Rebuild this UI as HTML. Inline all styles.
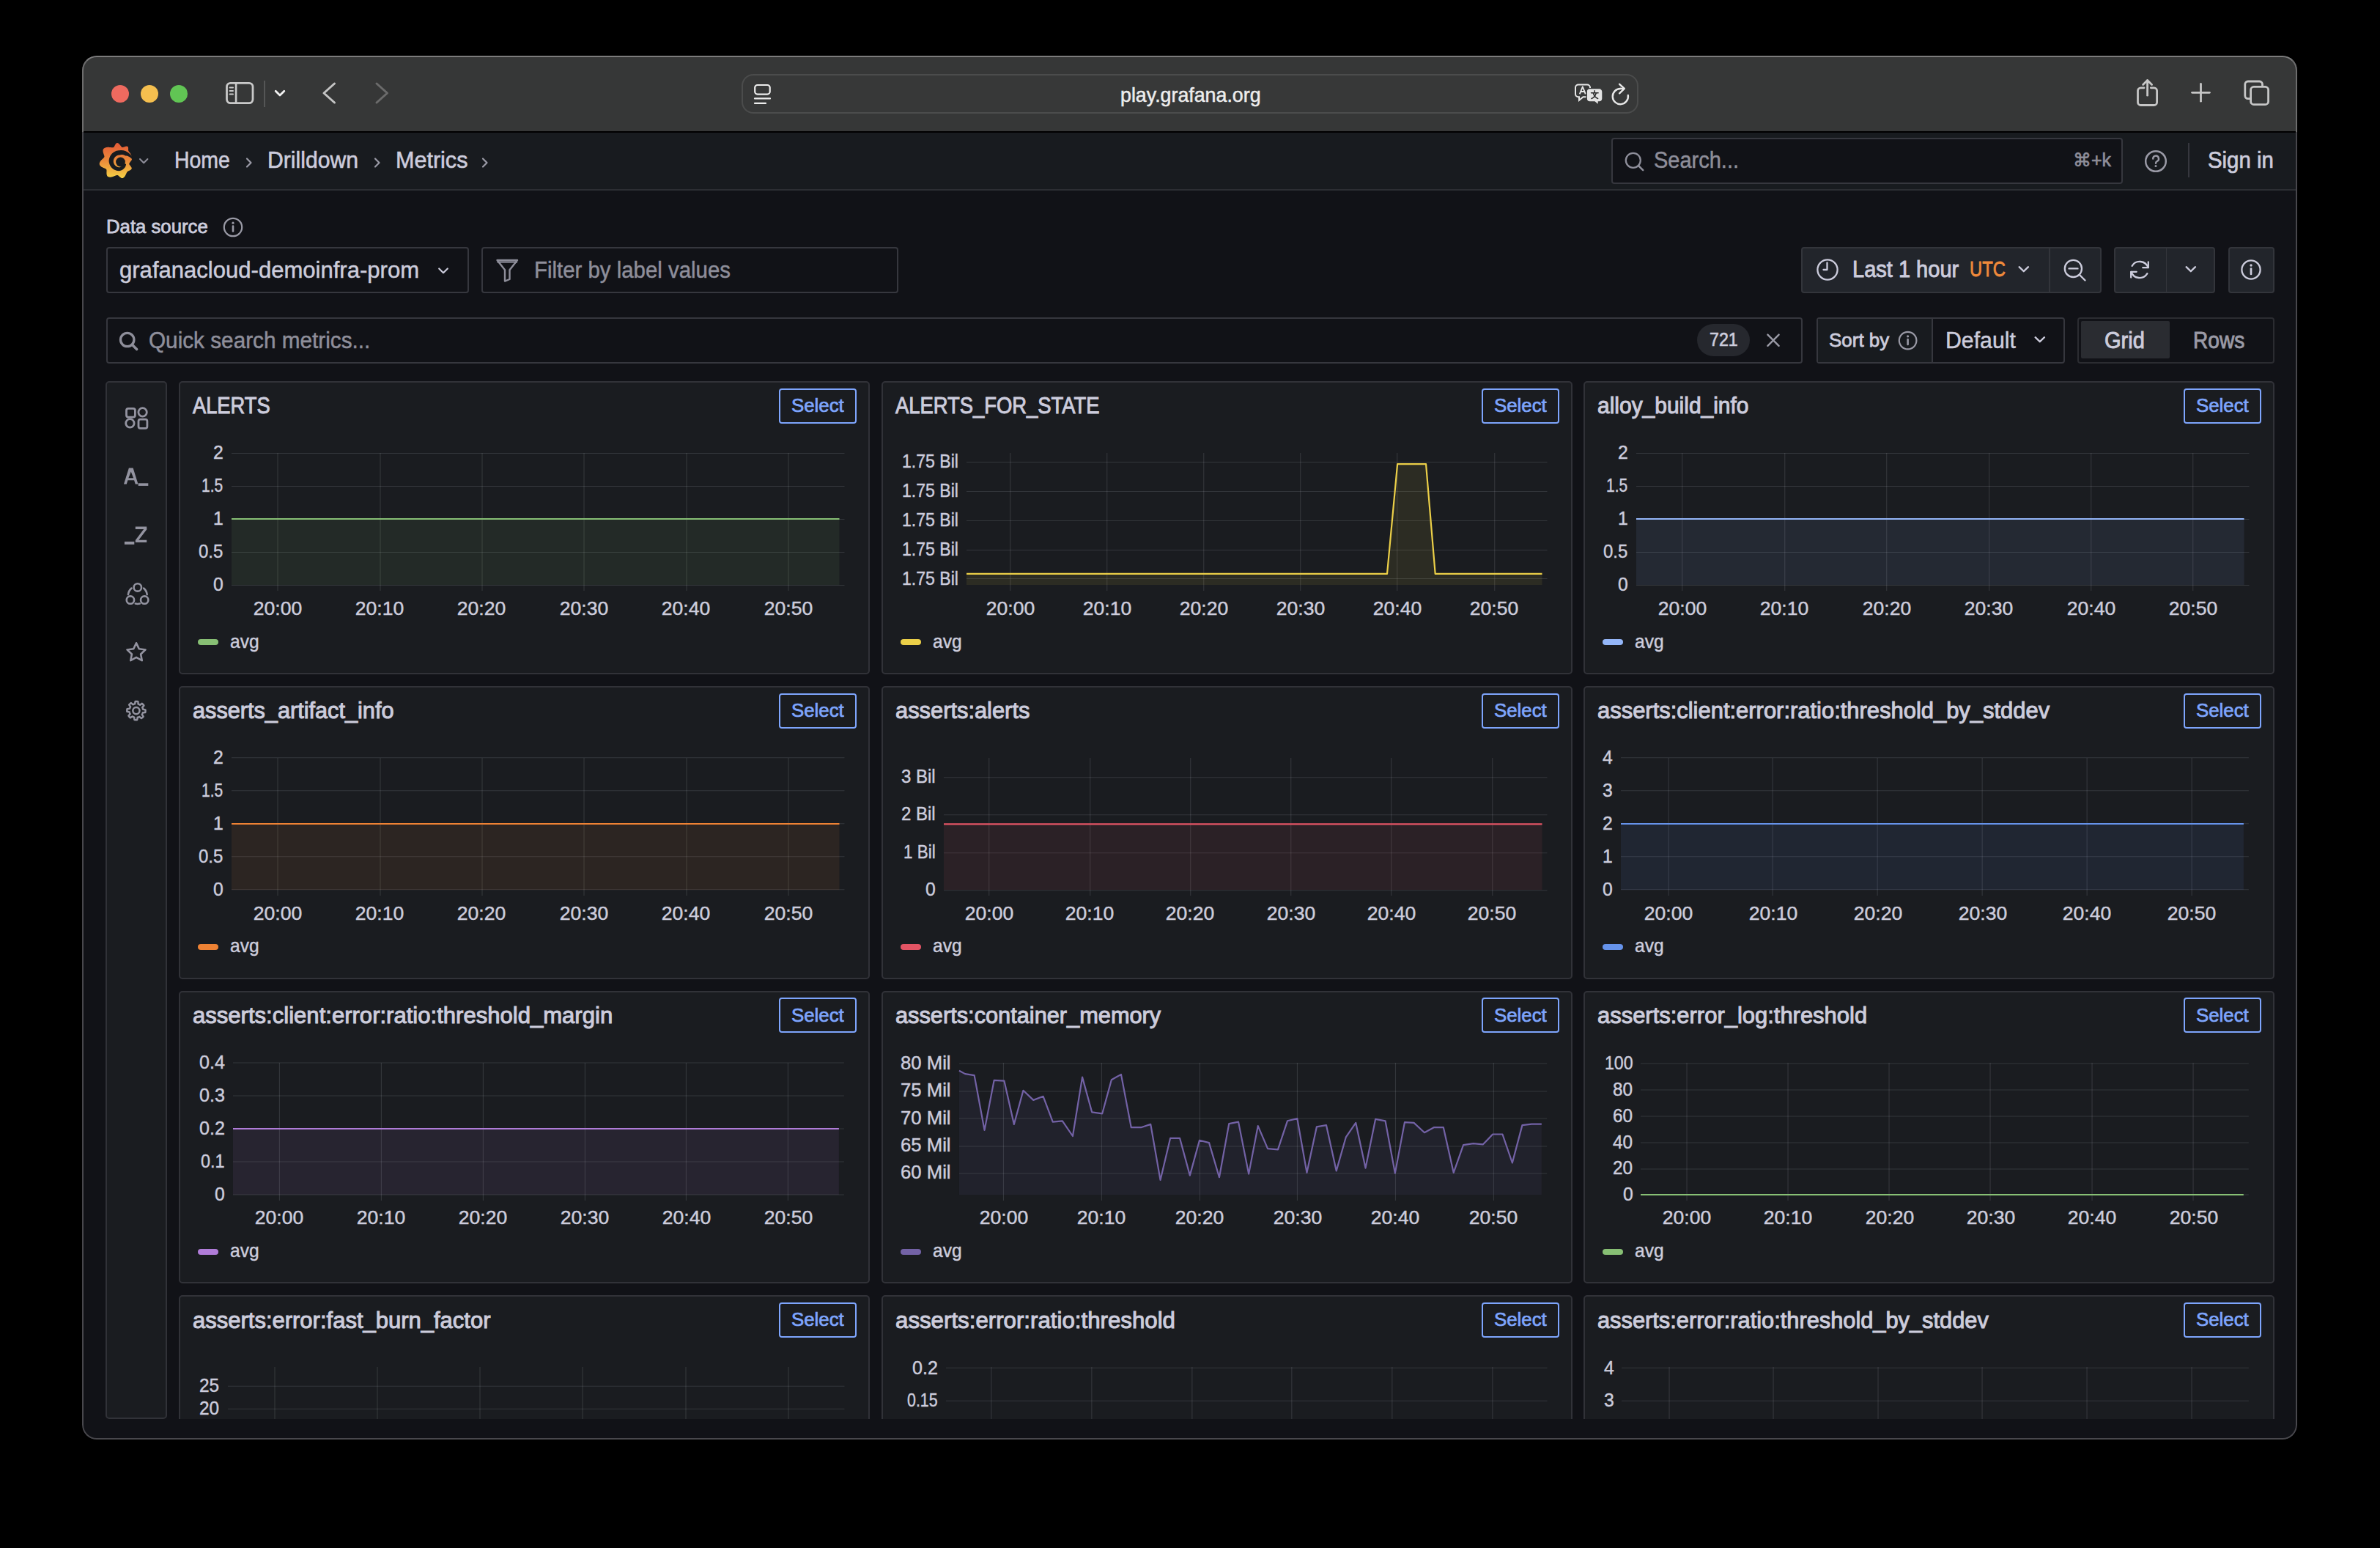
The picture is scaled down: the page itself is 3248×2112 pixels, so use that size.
<!DOCTYPE html>
<html><head><meta charset="utf-8"><title>Grafana Metrics Drilldown</title>
<style>
html,body{margin:0;padding:0;background:#000;width:3248px;height:2112px;overflow:hidden;}
body{position:relative;font-family:"Liberation Sans",sans-serif;}
.t{position:absolute;white-space:nowrap;line-height:1;}
#w{position:absolute;left:0;top:0;width:3248px;height:2112px;clip-path:inset(76px 113px 148px 112px round 20px);background:#111217;}
svg{overflow:visible;}
</style></head><body>
<div id="w">

<div style="position:absolute;left:0.00px;top:0.00px;width:3248.00px;height:180.00px;box-sizing:border-box;background:#363737;"></div>
<div style="position:absolute;left:0.00px;top:179.20px;width:3248.00px;height:1.60px;box-sizing:border-box;background:#000;"></div>
<div style="position:absolute;left:151.80px;top:115.80px;width:24.40px;height:24.40px;box-sizing:border-box;border-radius:50%;background:#ee6a5f;"></div>
<div style="position:absolute;left:191.80px;top:115.80px;width:24.40px;height:24.40px;box-sizing:border-box;border-radius:50%;background:#f5bf4f;"></div>
<div style="position:absolute;left:231.80px;top:115.80px;width:24.40px;height:24.40px;box-sizing:border-box;border-radius:50%;background:#61c554;"></div>
<svg style="position:absolute;left:300.00px;top:100.00px;" width="60" height="50" viewBox="0 0 60 50">
<rect x="9.5" y="13.3" width="35.5" height="27.3" rx="5" fill="none" stroke="#c9c9c9" stroke-width="2.8"/>
<line x1="22.1" y1="13" x2="22.1" y2="41" stroke="#c9c9c9" stroke-width="2.6"/>
<line x1="13.6" y1="19.6" x2="18" y2="19.6" stroke="#c9c9c9" stroke-width="2" stroke-linecap="round"/>
<line x1="13.6" y1="24" x2="18" y2="24" stroke="#c9c9c9" stroke-width="2" stroke-linecap="round"/>
<line x1="13.6" y1="28.4" x2="18" y2="28.4" stroke="#c9c9c9" stroke-width="2" stroke-linecap="round"/>
</svg>
<div style="position:absolute;left:360.30px;top:110.00px;width:1.60px;height:36.00px;box-sizing:border-box;background:#555656;"></div>
<svg style="position:absolute;left:370.00px;top:115.00px;" width="24" height="24" viewBox="0 0 24 24"><polyline points="6.2,9.3 12,15 17.8,9.3" fill="none" stroke="#f2f2f2" stroke-width="2.8" stroke-linecap="round" stroke-linejoin="round"/></svg>
<svg style="position:absolute;left:430.00px;top:105.00px;" width="40" height="45" viewBox="0 0 40 45"><polyline points="26.5,9 12,22 26.5,35" fill="none" stroke="#c4c4c4" stroke-width="3" stroke-linecap="round" stroke-linejoin="round"/></svg>
<svg style="position:absolute;left:500.00px;top:105.00px;" width="40" height="45" viewBox="0 0 40 45"><polyline points="14,9 28.5,22 14,35" fill="none" stroke="#6b6b6b" stroke-width="3" stroke-linecap="round" stroke-linejoin="round"/></svg>
<div style="position:absolute;left:1012.00px;top:101.00px;width:1223.50px;height:53.50px;box-sizing:border-box;border-radius:16px;border:2px solid #4b4c4c;background:#373838;"></div>
<svg style="position:absolute;left:1020.00px;top:108.00px;" width="40" height="40" viewBox="0 0 40 40">
<rect x="10.2" y="8" width="20.5" height="12.6" rx="3.6" fill="none" stroke="#ededed" stroke-width="2.2"/>
<line x1="10" y1="26.4" x2="31" y2="26.4" stroke="#ededed" stroke-width="2.2" stroke-linecap="round"/>
<line x1="10" y1="32.9" x2="25" y2="32.9" stroke="#ededed" stroke-width="2.2" stroke-linecap="round"/>
</svg>
<div class="t" style="left:1529.24px;top:115.72px;font-size:27.5px;color:#ededed;-webkit-text-stroke:0.5px #ededed;transform:scaleX(0.9737);transform-origin:left center;">play.grafana.org</div>
<svg style="position:absolute;left:2140.00px;top:105.00px;" width="60" height="45" viewBox="0 0 60 45">
<path d="M14,10.6 h12 a4,4 0 0 1 4,4 v8.6 a4,4 0 0 1 -4,4 h-5.5 l-5.5,4.6 v-4.6 h-1 a4,4 0 0 1 -4,-4 v-8.6 a4,4 0 0 1 4,-4 z" fill="none" stroke="#e6e6e6" stroke-width="2"/>
<path d="M15.8,23.4 L19.8,13.3 L23.8,23.4 M17.3,20 h5" fill="none" stroke="#e6e6e6" stroke-width="1.9" stroke-linejoin="round"/>
<path d="M29.6,15.6 h13 a4.4,4.4 0 0 1 4.4,4.4 v9.6 a4.4,4.4 0 0 1 -4.4,4.4 h-1.2 v4.4 l-5.2,-4.4 h-6.6 a4.4,4.4 0 0 1 -4.4,-4.4 v-9.6 a4.4,4.4 0 0 1 4.4,-4.4 z" fill="#e3e3e3" stroke="#373838" stroke-width="1.4"/>
<path d="M31.5,21.8 h9.6 M36.2,18.8 v3 M32,29.5 q4.5,-1.5 6.2,-7.2 M40.6,29.5 q-4.5,-1.5 -6.2,-7.2" fill="none" stroke="#2a2a2a" stroke-width="1.5" stroke-linecap="round"/>
</svg>
<svg style="position:absolute;left:2195.00px;top:108.00px;" width="40" height="40" viewBox="0 0 40 40">
<path d="M16.3,13 A10.6,10.6 0 1 0 26.8,22" fill="none" stroke="#e8e8e8" stroke-width="2.4" stroke-linecap="round"/>
<polyline points="15.1,6.8 21.8,12.8 15.1,19.3" fill="none" stroke="#e8e8e8" stroke-width="2.4" stroke-linecap="round" stroke-linejoin="round"/>
<line x1="16" y1="12.9" x2="21" y2="12.9" stroke="#e8e8e8" stroke-width="2.4"/>
</svg>
<svg style="position:absolute;left:2905.00px;top:100.00px;" width="50" height="50" viewBox="0 0 50 50">
<path d="M21,19.8 h-4.5 a4,4 0 0 0 -4,4 v15.7 a4,4 0 0 0 4,4 h18.1 a4,4 0 0 0 4,-4 v-15.7 a4,4 0 0 0 -4,-4 h-4.3" fill="none" stroke="#c6c6c6" stroke-width="2.8" stroke-linecap="round"/>
<line x1="25.6" y1="9.8" x2="25.6" y2="30.2" stroke="#c6c6c6" stroke-width="2.8" stroke-linecap="round"/>
<polyline points="19.6,15.6 25.6,9.6 31.6,15.6" fill="none" stroke="#c6c6c6" stroke-width="2.8" stroke-linecap="round" stroke-linejoin="round"/>
</svg>
<svg style="position:absolute;left:2980.00px;top:100.00px;" width="50" height="50" viewBox="0 0 50 50">
<line x1="23.5" y1="14.4" x2="23.5" y2="38.2" stroke="#c6c6c6" stroke-width="2.8" stroke-linecap="round"/>
<line x1="11.6" y1="26.3" x2="35.4" y2="26.3" stroke="#c6c6c6" stroke-width="2.8" stroke-linecap="round"/>
</svg>
<svg style="position:absolute;left:3055.00px;top:100.00px;" width="50" height="50" viewBox="0 0 50 50">
<path d="M16.4,34.6 h-3.6 a4,4 0 0 1 -4,-4 v-15.6 a4,4 0 0 1 4,-4 h15.7 a4,4 0 0 1 4,4 v3.4" fill="none" stroke="#c6c6c6" stroke-width="2.8"/>
<rect x="16.6" y="18.4" width="24" height="24.2" rx="4.2" fill="none" stroke="#c6c6c6" stroke-width="2.8"/>
</svg>
<div style="position:absolute;left:0.00px;top:181.00px;width:3248.00px;height:77.00px;box-sizing:border-box;background:#181b1f;"></div>
<div style="position:absolute;left:0.00px;top:258.00px;width:3248.00px;height:2.00px;box-sizing:border-box;background:#2c2e33;"></div>
<svg style="position:absolute;left:130.00px;top:190.00px;" width="56" height="58" viewBox="0 0 56 58">
<defs><linearGradient id="lg" x1="0" y1="5" x2="0" y2="53" gradientUnits="userSpaceOnUse">
<stop offset="0" stop-color="#e35a37"/><stop offset="0.5" stop-color="#ea8a3a"/><stop offset="1" stop-color="#f6d044"/></linearGradient></defs>
<path d="M6.98,30.00 L7.12,29.81 L7.26,29.62 L7.40,29.43 L7.55,29.25 L7.70,29.07 L7.86,28.89 L8.02,28.72 L8.18,28.54 L8.34,28.37 L8.51,28.21 L8.67,28.04 L8.84,27.88 L9.00,27.72 L9.17,27.57 L9.34,27.41 L9.50,27.26 L9.67,27.11 L9.83,26.96 L9.99,26.82 L10.15,26.68 L10.31,26.54 L10.46,26.40 L10.61,26.26 L10.76,26.12 L10.90,25.99 L11.04,25.85 L11.17,25.72 L11.30,25.59 L11.43,25.46 L11.54,25.32 L11.66,25.19 L11.76,25.06 L11.87,24.92 L11.96,24.79 L12.05,24.65 L12.13,24.52 L12.20,24.38 L12.26,24.24 L12.32,24.09 L12.37,23.95 L12.40,23.79 L12.42,23.63 L12.43,23.47 L12.42,23.30 L12.40,23.13 L12.38,22.94 L12.34,22.76 L12.30,22.56 L12.24,22.36 L12.18,22.16 L12.12,21.95 L12.04,21.73 L11.97,21.51 L11.88,21.28 L11.80,21.05 L11.71,20.81 L11.62,20.56 L11.53,20.32 L11.44,20.07 L11.35,19.81 L11.26,19.55 L11.17,19.29 L11.09,19.02 L11.01,18.76 L10.93,18.49 L10.85,18.21 L10.78,17.94 L10.72,17.67 L10.66,17.40 L10.61,17.12 L10.56,16.85 L10.53,16.58 L10.50,16.31 L10.48,16.04 L10.47,15.78 L10.47,15.52 L10.48,15.27 L10.50,15.02 L10.53,14.78 L10.58,14.54 L10.63,14.31 L10.70,14.09 L10.78,13.88 L10.87,13.67 L10.97,13.48 L11.09,13.30 L11.23,13.13 L11.37,12.97 L11.52,12.82 L11.68,12.68 L11.84,12.53 L12.00,12.40 L12.18,12.27 L12.36,12.15 L12.54,12.04 L12.73,11.93 L12.92,11.82 L13.11,11.72 L13.31,11.63 L13.51,11.54 L13.72,11.46 L13.93,11.39 L14.14,11.32 L14.35,11.25 L14.57,11.19 L14.79,11.14 L15.01,11.09 L15.23,11.05 L15.45,11.01 L15.68,10.97 L15.90,10.94 L16.13,10.91 L16.35,10.89 L16.58,10.87 L16.80,10.86 L17.03,10.85 L17.26,10.84 L17.48,10.83 L17.71,10.83 L17.94,10.84 L18.16,10.84 L18.38,10.85 L18.61,10.86 L18.83,10.87 L19.05,10.88 L19.27,10.90 L19.48,10.91 L19.70,10.93 L19.91,10.95 L20.13,10.97 L20.34,10.99 L20.55,11.01 L20.75,11.04 L20.96,11.06 L21.16,11.08 L21.36,11.10 L21.56,11.12 L21.76,11.14 L21.95,11.15 L22.15,11.17 L22.34,11.18 L22.53,11.20 L22.71,11.21 L22.90,11.21 L23.08,11.22 L23.26,11.22 L23.44,11.22 L23.61,11.21 L23.79,11.20 L23.96,11.19 L24.13,11.17 L24.30,11.15 L24.47,11.13 L24.64,11.10 L24.80,11.06 L24.96,11.01 L25.12,10.91 L25.27,10.79 L25.41,10.64 L25.55,10.46 L25.70,10.26 L25.84,10.03 L25.98,9.79 L26.12,9.52 L26.27,9.25 L26.42,8.96 L26.57,8.67 L26.73,8.36 L26.89,8.06 L27.05,7.76 L27.23,7.45 L27.40,7.16 L27.59,6.87 L27.77,6.59 L27.97,6.32 L28.16,6.08 L28.37,5.85 L28.57,5.64 L28.79,5.46 L29.00,5.30 L29.22,5.18 L29.43,5.08 L29.65,5.03 L29.87,5.01 L30.09,5.02 L30.31,5.05 L30.52,5.09 L30.74,5.16 L30.95,5.23 L31.16,5.33 L31.37,5.43 L31.57,5.55 L31.77,5.68 L31.97,5.83 L32.16,5.98 L32.35,6.14 L32.54,6.31 L32.72,6.49 L32.90,6.68 L33.08,6.87 L33.25,7.06 L33.42,7.26 L33.58,7.47 L33.75,7.67 L33.90,7.88 L34.06,8.08 L34.21,8.29 L34.36,8.49 L34.51,8.69 L34.66,8.89 L34.80,9.09 L34.94,9.28 L35.08,9.46 L35.22,9.64 L35.37,9.81 L35.51,9.98 L35.65,10.13 L35.79,10.27 L35.94,10.41 L36.09,10.53 L36.24,10.64 L36.39,10.74 L36.55,10.83 L36.72,10.90 L36.89,10.95 L37.07,10.98 L37.27,10.99 L37.47,10.98 L37.68,10.95 L37.90,10.91 L38.13,10.85 L38.37,10.78 L38.62,10.70 L38.88,10.62 L39.14,10.53 L39.41,10.43 L39.68,10.33 L39.96,10.23 L40.24,10.14 L40.52,10.04 L40.81,9.95 L41.10,9.87 L41.38,9.79 L41.67,9.73 L41.95,9.67 L42.23,9.63 L42.51,9.60 L42.77,9.58 L43.03,9.58 L43.28,9.60 L43.52,9.64 L43.75,9.70 L43.97,9.78 L44.16,9.88 L44.35,10.00 L44.50,10.16 L44.64,10.34 L44.75,10.54 L44.85,10.77 L44.92,11.02 L44.98,11.29 L45.03,11.56 L45.06,11.85 L45.07,12.15 L45.08,12.45 L45.08,12.75 L45.08,13.06 L45.07,13.36 L45.06,13.66 L45.05,13.95 L45.04,14.24 L45.04,14.51 L45.05,14.77 L45.07,15.02 L45.10,15.25 L45.15,15.46 L45.23,15.64 L45.31,15.82 L45.41,15.99 L45.50,16.15 L45.60,16.32 L45.70,16.47 L45.81,16.63 L45.92,16.78 L46.03,16.93 L46.14,17.08 L46.26,17.23 L46.38,17.38 L46.49,17.52 L46.61,17.67 L46.73,17.81 L46.85,17.96 L46.97,18.10 L47.09,18.25 L47.21,18.40 L47.33,18.55 L47.45,18.70 L47.56,18.85 L47.67,19.00 L47.78,19.16 L47.88,19.32 L47.98,19.48 L48.08,19.64 L48.17,19.81 L48.26,19.97 L48.34,20.15 L48.42,20.32 L48.49,20.49 L48.57,20.67 L48.64,20.84 L48.71,21.02 L48.78,21.19 L48.85,21.37 L48.92,21.55 L48.98,21.72 L49.05,21.90 L49.11,22.08 L49.17,22.26 L49.23,22.44 L49.28,22.62 L49.34,22.80 L49.39,22.98 L49.44,23.16 L49.49,23.34 L49.54,23.53 L49.58,23.71 L49.62,23.89 L49.66,24.08 L49.70,24.26 L49.73,24.44 L49.76,24.63 L49.79,24.82 L49.82,25.00 L49.85,25.19 L49.87,25.37 L49.89,25.56 L49.91,25.75 L49.92,25.93 L49.93,26.12 L49.94,26.31 L49.95,26.49 L49.95,26.68 L49.95,26.87 L49.95,27.06 L49.94,27.24 L49.93,27.43 L49.92,27.62 L49.91,27.80 L49.87,27.99 L49.79,28.18 L49.69,28.37 L49.59,28.56 L49.47,28.75 L49.34,28.93 L49.20,29.12 L49.06,29.30 L48.92,29.48 L48.77,29.65 L48.62,29.83 L48.47,30.00 L48.32,30.17 L48.17,30.33 L48.03,30.50 L47.90,30.66 L47.78,30.82 L47.67,30.98 L47.57,31.14 L47.47,31.29 L47.38,31.45 L47.28,31.60 L47.17,31.75 L47.07,31.90 L46.97,32.05 L46.86,32.19 L46.77,32.34 L46.67,32.48 L46.59,32.63 L46.51,32.77 L46.44,32.92 L46.38,33.06 L46.33,33.21 L46.30,33.36 L46.29,33.52 L46.29,33.67 L46.31,33.84 L46.35,34.00 L46.41,34.18 L46.47,34.36 L46.57,34.54 L46.69,34.74 L46.83,34.94 L46.99,35.16 L47.16,35.38 L47.35,35.61 L47.55,35.85 L47.75,36.09 L47.96,36.34 L48.17,36.60 L48.38,36.86 L48.58,37.13 L48.78,37.39 L48.96,37.66 L49.13,37.93 L49.29,38.20 L49.43,38.46 L49.55,38.72 L49.65,38.98 L49.72,39.23 L49.76,39.46 L49.78,39.69 L49.76,39.90 L49.70,40.09 L49.62,40.28 L49.53,40.46 L49.43,40.64 L49.32,40.80 L49.19,40.96 L49.06,41.12 L48.91,41.27 L48.76,41.41 L48.60,41.55 L48.43,41.68 L48.26,41.80 L48.08,41.92 L47.90,42.04 L47.71,42.15 L47.52,42.26 L47.32,42.36 L47.13,42.46 L46.93,42.55 L46.73,42.65 L46.53,42.74 L46.33,42.83 L46.14,42.91 L45.94,43.00 L45.75,43.09 L45.56,43.17 L45.37,43.26 L45.19,43.35 L45.01,43.44 L44.84,43.53 L44.67,43.63 L44.51,43.73 L44.36,43.83 L44.21,43.94 L44.07,44.05 L43.93,44.17 L43.81,44.30 L43.69,44.44 L43.58,44.58 L43.47,44.72 L43.36,44.87 L43.26,45.02 L43.16,45.18 L43.06,45.34 L42.96,45.51 L42.87,45.68 L42.78,45.85 L42.69,46.03 L42.60,46.21 L42.52,46.40 L42.43,46.58 L42.34,46.77 L42.25,46.97 L42.17,47.16 L42.08,47.36 L41.99,47.55 L41.90,47.75 L41.81,47.96 L41.71,48.16 L41.62,48.36 L41.52,48.56 L41.42,48.77 L41.32,48.97 L41.21,49.17 L41.11,49.37 L41.00,49.57 L40.88,49.77 L40.76,49.97 L40.64,50.17 L40.52,50.36 L40.39,50.55 L40.26,50.73 L40.12,50.92 L39.98,51.09 L39.84,51.27 L39.69,51.44 L39.54,51.60 L39.38,51.76 L39.22,51.91 L39.05,52.06 L38.88,52.20 L38.71,52.33 L38.53,52.46 L38.35,52.58 L38.17,52.69 L37.98,52.79 L37.78,52.88 L37.58,52.96 L37.38,53.03 L37.18,53.09 L36.96,53.13 L36.74,53.13 L36.51,53.11 L36.27,53.07 L36.03,53.00 L35.79,52.91 L35.54,52.80 L35.29,52.67 L35.04,52.53 L34.79,52.37 L34.54,52.20 L34.29,52.02 L34.04,51.83 L33.80,51.63 L33.55,51.43 L33.32,51.22 L33.08,51.01 L32.86,50.80 L32.63,50.60 L32.41,50.39 L32.20,50.20 L31.99,50.01 L31.79,49.83 L31.59,49.66 L31.39,49.50 L31.21,49.37 L31.02,49.24 L30.84,49.14 L30.67,49.06 L30.50,49.00 L30.33,48.97 L30.16,48.96 L29.99,48.97 L29.83,48.99 L29.66,49.01 L29.50,49.04 L29.33,49.07 L29.17,49.11 L29.00,49.15 L28.83,49.19 L28.66,49.24 L28.49,49.29 L28.32,49.35 L28.15,49.41 L27.98,49.47 L27.81,49.53 L27.63,49.60 L27.45,49.67 L27.27,49.74 L27.09,49.82 L26.91,49.89 L26.72,49.97 L26.54,50.04 L26.35,50.12 L26.16,50.20 L25.97,50.28 L25.78,50.36 L25.58,50.44 L25.38,50.52 L25.18,50.60 L24.98,50.67 L24.78,50.75 L24.57,50.82 L24.37,50.90 L24.16,50.97 L23.95,51.04 L23.74,51.11 L23.53,51.17 L23.31,51.23 L23.10,51.29 L22.88,51.34 L22.66,51.40 L22.44,51.44 L22.22,51.49 L22.00,51.53 L21.78,51.57 L21.56,51.60 L21.34,51.62 L21.12,51.64 L20.90,51.66 L20.68,51.67 L20.46,51.68 L20.24,51.68 L20.02,51.67 L19.81,51.66 L19.59,51.64 L19.37,51.62 L19.16,51.59 L18.95,51.55 L18.74,51.51 L18.54,51.46 L18.33,51.40 L18.13,51.33 L17.93,51.26 L17.74,51.18 L17.55,51.09 L17.36,51.00 L17.18,50.89 L17.00,50.78 L16.84,50.65 L16.68,50.50 L16.54,50.34 L16.40,50.16 L16.28,49.97 L16.16,49.77 L16.06,49.56 L15.96,49.33 L15.87,49.10 L15.80,48.86 L15.73,48.61 L15.67,48.35 L15.61,48.09 L15.57,47.82 L15.53,47.55 L15.50,47.28 L15.48,47.00 L15.46,46.72 L15.44,46.45 L15.44,46.17 L15.43,45.89 L15.43,45.61 L15.43,45.33 L15.44,45.06 L15.45,44.79 L15.46,44.52 L15.47,44.26 L15.48,44.00 L15.49,43.75 L15.49,43.51 L15.50,43.27 L15.50,43.04 L15.50,42.81 L15.49,42.60 L15.48,42.39 L15.46,42.19 L15.43,42.00 L15.40,41.82 L15.35,41.65 L15.30,41.50 L15.24,41.35 L15.16,41.21 L15.07,41.08 L14.97,40.96 L14.86,40.85 L14.75,40.74 L14.63,40.63 L14.50,40.53 L14.37,40.44 L14.23,40.34 L14.08,40.25 L13.93,40.17 L13.77,40.08 L13.61,40.00 L13.44,39.92 L13.26,39.83 L13.08,39.75 L12.90,39.67 L12.71,39.60 L12.52,39.52 L12.32,39.44 L12.12,39.35 L11.92,39.27 L11.72,39.19 L11.51,39.10 L11.30,39.02 L11.09,38.93 L10.88,38.84 L10.66,38.75 L10.45,38.65 L10.24,38.55 L10.02,38.45 L9.81,38.34 L9.60,38.24 L9.39,38.12 L9.18,38.01 L8.97,37.89 L8.76,37.77 L8.56,37.64 L8.36,37.51 L8.17,37.38 L7.98,37.24 L7.79,37.10 L7.61,36.95 L7.44,36.80 L7.27,36.64 L7.10,36.49 L6.95,36.32 L6.80,36.16 L6.66,35.99 L6.52,35.81 L6.40,35.64 L6.28,35.45 L6.18,35.27 L6.08,35.08 L5.99,34.89 L5.92,34.70 L5.85,34.50 L5.80,34.30 L5.76,34.10 L5.73,33.89 L5.71,33.69 L5.71,33.48 L5.71,33.27 L5.72,33.06 L5.75,32.85 L5.78,32.65 L5.83,32.44 L5.88,32.23 L5.94,32.02 L6.02,31.81 L6.09,31.60 L6.18,31.40 L6.28,31.19 L6.38,30.99 L6.49,30.79 L6.60,30.59 L6.72,30.39 L6.85,30.19Z" fill="url(#lg)"/>
<path d="M42.11,34.01 L42.03,34.54 L41.93,35.06 L41.79,35.59 L41.62,36.12 L41.41,36.64 L41.18,37.16 L40.91,37.67 L40.60,38.17 L40.27,38.66 L39.90,39.14 L39.50,39.61 L39.07,40.05 L38.61,40.48 L38.12,40.89 L37.60,41.27 L37.05,41.63 L36.48,41.96 L35.88,42.26 L35.26,42.53 L34.62,42.77 L33.95,42.98 L33.27,43.12 L32.58,43.15 L31.89,43.14 L31.19,43.10 L30.49,43.02 L29.80,42.90 L29.11,42.75 L28.43,42.55 L27.75,42.33 L27.09,42.06 L26.43,41.76 L25.79,41.42 L25.17,41.05 L24.57,40.65 L23.98,40.21 L23.41,39.74 L22.87,39.24 L22.36,38.71 L21.87,38.14 L21.41,37.56 L20.98,36.94 L20.58,36.30 L20.21,35.64 L19.87,34.96 L19.58,34.26 L19.31,33.54 L19.09,32.80 L18.90,32.05 L18.76,31.29 L18.65,30.52 L18.60,29.74 L18.64,28.96 L18.71,28.18 L18.83,27.41 L18.99,26.65 L19.19,25.90 L19.42,25.15 L19.70,24.42 L20.01,23.71 L20.36,23.01 L20.74,22.33 L21.16,21.68 L21.62,21.05 L22.10,20.44 L22.62,19.85 L23.17,19.30 L23.74,18.78 L24.34,18.28 L24.97,17.82 L25.62,17.39 L26.29,17.00 L26.98,16.64 L27.69,16.32 L28.42,16.04 L29.16,15.79 L29.91,15.58 L30.67,15.42 L31.43,15.29 L32.21,15.20 L32.98,15.16 L33.76,15.12 L34.55,15.05 L35.34,15.02 L36.14,15.04 L36.94,15.09 L37.75,15.20 L38.55,15.34 L39.35,15.53 L40.14,15.76 L40.92,16.04 L41.70,16.36 L42.46,16.72 L43.20,17.12 L43.93,17.57 L44.64,18.06 L45.34,18.57 L46.05,19.09 L46.73,19.66 L47.39,20.27 L48.02,20.93 L48.62,21.62 L49.19,22.35 L49.72,23.11 L50.22,23.91 L50.68,24.75 L51.09,25.61 L51.46,26.51 L49.87,26.82 L49.18,26.09 L48.46,25.43 L47.71,24.83 L46.94,24.29 L46.16,23.83 L45.36,23.42 L44.56,23.09 L43.76,22.81 L42.96,22.61 L42.17,22.46 L41.39,22.38 L40.80,22.17 L40.28,21.92 L39.76,21.69 L39.23,21.50 L38.70,21.34 L38.17,21.21 L37.64,21.12 L37.11,21.05 L36.59,21.02 L36.08,21.01 L35.57,21.04 L35.07,21.09 L34.58,21.17 L34.11,21.27 L33.65,21.40 L33.20,21.45 L32.75,21.47 L32.31,21.52 L31.87,21.59 L31.43,21.68 L30.99,21.80 L30.56,21.93 L30.14,22.09 L29.73,22.28 L29.33,22.48 L28.94,22.70 L28.56,22.95 L28.20,23.21 L27.85,23.50 L27.51,23.80 L27.19,24.12 L26.89,24.45 L26.60,24.80 L26.33,25.17 L26.09,25.55 L25.86,25.94 L25.65,26.34 L25.47,26.75 L25.30,27.18 L25.16,27.61 L25.04,28.05 L24.95,28.49 L24.88,28.94 L24.83,29.39 L24.80,29.85 L24.81,30.30 L24.86,30.76 L24.92,31.21 L25.01,31.65 L25.12,32.09 L25.25,32.52 L25.41,32.95 L25.59,33.36 L25.78,33.76 L26.00,34.16 L26.24,34.53 L26.50,34.90 L26.78,35.25 L27.07,35.59 L27.38,35.91 L27.71,36.21 L28.05,36.49 L28.41,36.76 L28.77,37.01 L29.15,37.23 L29.54,37.44 L29.95,37.62 L30.35,37.79 L30.77,37.93 L31.19,38.05 L31.62,38.14 L32.05,38.22 L32.48,38.27 L32.92,38.30 L33.36,38.30 L33.79,38.18 L34.20,37.98 L34.59,37.76 L34.96,37.52 L35.31,37.26 L35.64,36.99 L35.94,36.70 L36.22,36.40 L36.47,36.09 L36.70,35.78 L36.91,35.45 L37.09,35.12 L37.24,34.79 L37.37,34.46 L37.48,34.12 L37.56,33.79 L37.62,33.46 L37.65,33.13 L37.67,32.81 L37.66,32.50 L37.63,32.19 L37.58,31.90Z" fill="#181b1f"/>
<circle cx="34.5" cy="31" r="6.4" fill="#181b1f"/>
</svg>
<svg style="position:absolute;left:186.00px;top:210.00px;" width="20" height="20" viewBox="0 0 20 20"><polyline points="5,7 10.2,12.2 15.4,7" fill="none" stroke="#8e8e9a" stroke-width="2" stroke-linecap="round" stroke-linejoin="round"/></svg>
<div class="t" style="left:237.88px;top:202.76px;font-size:31px;color:#ccccdc;-webkit-text-stroke:0.6px #ccccdc;transform:scaleX(0.9172);transform-origin:left center;">Home</div>
<div class="t" style="left:364.79px;top:202.76px;font-size:31px;color:#ccccdc;-webkit-text-stroke:0.6px #ccccdc;transform:scaleX(0.9720);transform-origin:left center;">Drilldown</div>
<div class="t" style="left:540.30px;top:202.76px;font-size:31px;color:#ccccdc;-webkit-text-stroke:0.6px #ccccdc;transform:scaleX(0.9851);transform-origin:left center;">Metrics</div>
<svg style="position:absolute;left:329.50px;top:210.00px;" width="20" height="24" viewBox="0 0 20 24"><polyline points="7,6.5 12.5,12 7,17.5" fill="none" stroke="#9a9aa6" stroke-width="2.2" stroke-linecap="round" stroke-linejoin="round"/></svg>
<svg style="position:absolute;left:504.50px;top:210.00px;" width="20" height="24" viewBox="0 0 20 24"><polyline points="7,6.5 12.5,12 7,17.5" fill="none" stroke="#9a9aa6" stroke-width="2.2" stroke-linecap="round" stroke-linejoin="round"/></svg>
<svg style="position:absolute;left:652.00px;top:210.00px;" width="20" height="24" viewBox="0 0 20 24"><polyline points="7,6.5 12.5,12 7,17.5" fill="none" stroke="#9a9aa6" stroke-width="2.2" stroke-linecap="round" stroke-linejoin="round"/></svg>
<div style="position:absolute;left:2198.50px;top:187.50px;width:698.50px;height:63.00px;box-sizing:border-box;background:#111217;border:2px solid #36373e;border-radius:4px;"></div>
<svg style="position:absolute;left:2210.00px;top:200.00px;" width="40" height="40" viewBox="0 0 40 40"><circle cx="18.8" cy="18.8" r="10" fill="none" stroke="#8e8e9a" stroke-width="2.3"/><line x1="26" y1="26" x2="32.2" y2="32.2" stroke="#8e8e9a" stroke-width="2.5" stroke-linecap="round"/></svg>
<div class="t" style="left:2257.43px;top:202.96px;font-size:31px;color:#8e8e9a;-webkit-text-stroke:0.5px #8e8e9a;transform:scaleX(0.9352);transform-origin:left center;">Search...</div>
<div class="t" style="left:1881.00px;width:1000px;text-align:right;top:205.84px;font-size:25px;color:#8e8e9a;-webkit-text-stroke:0.6px #8e8e9a;">&#8984;+k</div>
<svg style="position:absolute;left:2922.00px;top:200.00px;" width="40" height="40" viewBox="0 0 40 40"><circle cx="20" cy="20" r="13.8" fill="none" stroke="#9a9aa6" stroke-width="2.5"/><path d="M16.2,16.6 a3.9,3.9 0 1 1 5.6,3.4 c-1.3,0.7 -1.8,1.4 -1.8,2.8" fill="none" stroke="#9a9aa6" stroke-width="2.4" stroke-linecap="round"/><circle cx="20" cy="26.6" r="1.5" fill="#9a9aa6"/></svg>
<div style="position:absolute;left:2985.80px;top:195.00px;width:1.80px;height:47.00px;box-sizing:border-box;background:#36373e;"></div>
<div class="t" style="left:3012.93px;top:203.26px;font-size:31px;color:#ccccdc;-webkit-text-stroke:0.7px #ccccdc;transform:scaleX(0.9468);transform-origin:left center;">Sign in</div>
<div class="t" style="left:144.90px;top:296.49px;font-size:26px;color:#ccccdc;-webkit-text-stroke:0.8px #ccccdc;transform:scaleX(0.9893);transform-origin:left center;">Data source</div>
<svg style="position:absolute;left:298.00px;top:290.00px;" width="40" height="40" viewBox="0 0 40 40"><circle cx="20" cy="20" r="12.2" fill="none" stroke="#9a9aa6" stroke-width="2.2"/><line x1="20" y1="18.5" x2="20" y2="25.5" stroke="#9a9aa6" stroke-width="2.6" stroke-linecap="round"/><circle cx="20" cy="14.2" r="1.6" fill="#9a9aa6"/></svg>
<div style="position:absolute;left:144.50px;top:336.50px;width:495.50px;height:63.00px;box-sizing:border-box;background:#111217;border:2px solid #36373e;border-radius:4px;"></div>
<div class="t" style="left:162.75px;top:352.76px;font-size:31px;color:#ccccdc;-webkit-text-stroke:0.5px #ccccdc;transform:scaleX(1.0016);transform-origin:left center;">grafanacloud-demoinfra-prom</div>
<svg style="position:absolute;left:595.00px;top:360.00px;" width="20" height="20" viewBox="0 0 20 20"><polyline points="4.2,6.5 10,12.2 15.8,6.5" fill="none" stroke="#ccccdc" stroke-width="2.2" stroke-linecap="round" stroke-linejoin="round"/></svg>
<div style="position:absolute;left:656.50px;top:336.50px;width:569.50px;height:63.00px;box-sizing:border-box;background:#111217;border:2px solid #36373e;border-radius:4px;"></div>
<svg style="position:absolute;left:672.00px;top:348.00px;" width="40" height="40" viewBox="0 0 40 40"><path d="M6.5,7 h27.5 l-10.5,13.2 v12.8 l-6.5,2.6 v-15.4 z" fill="none" stroke="#8e8e9a" stroke-width="2.4" stroke-linejoin="round"/><line x1="6.5" y1="9.5" x2="34" y2="9.5" stroke="#8e8e9a" stroke-width="2.2"/></svg>
<div class="t" style="left:728.74px;top:353.46px;font-size:31px;color:#8e8e9a;-webkit-text-stroke:0.5px #8e8e9a;transform:scaleX(0.9485);transform-origin:left center;">Filter by label values</div>
<div style="position:absolute;left:2457.50px;top:336.50px;width:410.00px;height:63.00px;box-sizing:border-box;background:#22252b;border:2px solid #33353b;border-radius:4px;"></div>
<div style="position:absolute;left:2795.80px;top:338.00px;width:1.80px;height:60.00px;box-sizing:border-box;background:#33353b;"></div>
<svg style="position:absolute;left:2474.00px;top:348.00px;" width="40" height="40" viewBox="0 0 40 40"><circle cx="20" cy="20" r="13.6" fill="none" stroke="#ccccdc" stroke-width="2.3"/><polyline points="19.5,10.5 19.5,20 14.5,20" fill="none" stroke="#ccccdc" stroke-width="2.3" stroke-linecap="round" stroke-linejoin="round"/></svg>
<div class="t" style="left:2528.42px;top:351.76px;font-size:31px;color:#ccccdc;-webkit-text-stroke:0.9px #ccccdc;transform:scaleX(0.9360);transform-origin:left center;">Last 1 hour</div>
<div class="t" style="left:2687.83px;top:353.45px;font-size:29px;color:#ef8a3b;-webkit-text-stroke:0.8px #ef8a3b;transform:scaleX(0.8196);transform-origin:left center;">UTC</div>
<svg style="position:absolute;left:2752.00px;top:358.00px;" width="20" height="20" viewBox="0 0 20 20"><polyline points="3.6,6.2 9.8,12.2 16,6.2" fill="none" stroke="#ccccdc" stroke-width="2.3" stroke-linecap="round" stroke-linejoin="round"/></svg>
<svg style="position:absolute;left:2810.00px;top:347.00px;" width="40" height="40" viewBox="0 0 40 40"><circle cx="19.4" cy="19.4" r="11.6" fill="none" stroke="#ccccdc" stroke-width="2.3"/><line x1="13.6" y1="19.4" x2="25.4" y2="19.4" stroke="#ccccdc" stroke-width="2.4" stroke-linecap="round"/><line x1="28" y1="28" x2="35.5" y2="35.5" stroke="#ccccdc" stroke-width="2.4" stroke-linecap="round"/></svg>
<div style="position:absolute;left:2885.00px;top:336.50px;width:138.00px;height:63.00px;box-sizing:border-box;background:#22252b;border:2px solid #33353b;border-radius:4px;"></div>
<div style="position:absolute;left:2955.50px;top:338.00px;width:1.80px;height:60.00px;box-sizing:border-box;background:#33353b;"></div>
<svg style="position:absolute;left:2900.00px;top:348.00px;" width="40" height="40" viewBox="0 0 40 40"><path d="M31.5,17 A12.2,12.2 0 0 0 9.6,14.8 M8.5,23 A12.2,12.2 0 0 0 30.4,25.2" fill="none" stroke="#ccccdc" stroke-width="2.3" stroke-linecap="round"/><polyline points="31.8,9.5 31.8,17.2 24.3,17.2" fill="none" stroke="#ccccdc" stroke-width="2.3" stroke-linecap="round" stroke-linejoin="round"/><polyline points="8.2,30.5 8.2,22.8 15.7,22.8" fill="none" stroke="#ccccdc" stroke-width="2.3" stroke-linecap="round" stroke-linejoin="round"/></svg>
<svg style="position:absolute;left:2980.00px;top:358.00px;" width="20" height="20" viewBox="0 0 20 20"><polyline points="3.6,6.2 9.8,12.2 16,6.2" fill="none" stroke="#ccccdc" stroke-width="2.3" stroke-linecap="round" stroke-linejoin="round"/></svg>
<div style="position:absolute;left:3040.50px;top:336.50px;width:63.00px;height:63.00px;box-sizing:border-box;background:#22252b;border:2px solid #33353b;border-radius:4px;"></div>
<svg style="position:absolute;left:3052.00px;top:348.00px;" width="40" height="40" viewBox="0 0 40 40"><circle cx="20" cy="20" r="12.6" fill="none" stroke="#ccccdc" stroke-width="2.3"/><line x1="20" y1="18.5" x2="20" y2="26" stroke="#ccccdc" stroke-width="2.7" stroke-linecap="round"/><circle cx="20" cy="14" r="1.7" fill="#ccccdc"/></svg>
<div style="position:absolute;left:144.50px;top:432.50px;width:2315.00px;height:63.00px;box-sizing:border-box;background:#111217;border:2px solid #36373e;border-radius:4px;"></div>
<svg style="position:absolute;left:155.00px;top:444.00px;" width="40" height="40" viewBox="0 0 40 40"><circle cx="18.7" cy="19.5" r="9.2" fill="none" stroke="#8e8e9a" stroke-width="3.3"/><line x1="25.6" y1="26.6" x2="31.6" y2="32.6" stroke="#8e8e9a" stroke-width="3.6" stroke-linecap="round"/></svg>
<div class="t" style="left:202.64px;top:449.26px;font-size:31px;color:#8e8e9a;-webkit-text-stroke:0.5px #8e8e9a;transform:scaleX(0.9589);transform-origin:left center;">Quick search metrics...</div>
<div style="position:absolute;left:2316.00px;top:442.00px;width:72.00px;height:43.50px;box-sizing:border-box;background:#26282e;border-radius:22px;"></div>
<div class="t" style="left:2332.81px;top:449.99px;font-size:26px;color:#ccccdc;-webkit-text-stroke:0.7px #ccccdc;transform:scaleX(0.8921);transform-origin:left center;">721</div>
<svg style="position:absolute;left:2405.00px;top:449.00px;" width="30" height="30" viewBox="0 0 30 30"><line x1="7.4" y1="7.6" x2="22.6" y2="22.8" stroke="#9a9aa6" stroke-width="2.4" stroke-linecap="round"/><line x1="22.6" y1="7.6" x2="7.4" y2="22.8" stroke="#9a9aa6" stroke-width="2.4" stroke-linecap="round"/></svg>
<div style="position:absolute;left:2479.00px;top:432.50px;width:338.50px;height:63.00px;box-sizing:border-box;background:#111217;border:2px solid #36373e;border-radius:4px;"></div>
<div style="position:absolute;left:2481.00px;top:434.50px;width:156.00px;height:59.00px;box-sizing:border-box;background:#181b1f;"></div>
<div style="position:absolute;left:2636.20px;top:434.00px;width:1.80px;height:60.00px;box-sizing:border-box;background:#36373e;"></div>
<div class="t" style="left:2496.40px;top:451.19px;font-size:26px;color:#ccccdc;-webkit-text-stroke:0.8px #ccccdc;transform:scaleX(0.9981);transform-origin:left center;">Sort by</div>
<svg style="position:absolute;left:2584.00px;top:445.00px;" width="40" height="40" viewBox="0 0 40 40"><circle cx="19.6" cy="19.6" r="11.8" fill="none" stroke="#9a9aa6" stroke-width="2.2"/><line x1="19.6" y1="18" x2="19.6" y2="25" stroke="#9a9aa6" stroke-width="2.6" stroke-linecap="round"/><circle cx="19.6" cy="13.8" r="1.6" fill="#9a9aa6"/></svg>
<div class="t" style="left:2654.94px;top:448.76px;font-size:31px;color:#ccccdc;-webkit-text-stroke:0.5px #ccccdc;transform:scaleX(0.9758);transform-origin:left center;">Default</div>
<svg style="position:absolute;left:2774.00px;top:454.00px;" width="20" height="20" viewBox="0 0 20 20"><polyline points="3.6,6.2 9.8,12.2 16,6.2" fill="none" stroke="#ccccdc" stroke-width="2.3" stroke-linecap="round" stroke-linejoin="round"/></svg>
<div style="position:absolute;left:2835.00px;top:432.50px;width:268.50px;height:63.00px;box-sizing:border-box;background:#111217;border:2px solid #2b2c31;border-radius:4px;"></div>
<div style="position:absolute;left:2840.00px;top:438.00px;width:121.00px;height:51.00px;box-sizing:border-box;background:#2a2c31;border-radius:2px;"></div>
<div class="t" style="left:2872.42px;top:448.76px;font-size:31px;color:#ccccdc;-webkit-text-stroke:0.9px #ccccdc;transform:scaleX(0.9363);transform-origin:left center;">Grid</div>
<div class="t" style="left:2993.41px;top:448.76px;font-size:31px;color:#9a9aa6;-webkit-text-stroke:0.9px #9a9aa6;transform:scaleX(0.9056);transform-origin:left center;">Rows</div>
<div style="position:absolute;left:144.00px;top:520.00px;width:84.00px;height:1416.00px;box-sizing:border-box;background:#1a1c20;border:2px solid #313238;border-radius:5px;"></div>
<svg style="position:absolute;left:160.00px;top:545.00px;" width="50" height="50" viewBox="0 0 50 50"><rect x="12.5" y="12.3" width="11.9" height="11.8" rx="2.6" fill="none" stroke="#9393a0" stroke-width="2.8"/><circle cx="34.6" cy="17.4" r="5.7" fill="none" stroke="#9393a0" stroke-width="2.8"/><circle cx="17.4" cy="32.4" r="5.7" fill="none" stroke="#9393a0" stroke-width="2.8"/><rect x="29" y="27.2" width="11.9" height="12.1" rx="2.6" fill="none" stroke="#9393a0" stroke-width="2.8"/></svg>
<svg style="position:absolute;left:160.00px;top:630.00px;" width="50" height="40" viewBox="0 0 50 40"><path fill-rule="evenodd" d="M15.9,8.6 L21.6,8.6 L28.5,30.4 L24.7,30.4 L23.1,25.3 L14.4,25.3 L12.8,30.4 L9,30.4 Z M18.75,13.4 L22.1,22.2 L15.4,22.2 Z" fill="#9393a0"/><rect x="28.7" y="29.3" width="13.6" height="3.6" fill="#9393a0"/></svg>
<svg style="position:absolute;left:160.00px;top:710.00px;" width="50" height="40" viewBox="0 0 50 40"><rect x="9.9" y="28.9" width="13.4" height="3.9" fill="#9393a0"/><path d="M24.8,10.3 h15.4 M39.4,10.6 L26,28.2 M24.8,28.4 h15.4" fill="none" stroke="#9393a0" stroke-width="3.4" stroke-linejoin="miter"/></svg>
<svg style="position:absolute;left:160.00px;top:785.00px;" width="50" height="50" viewBox="0 0 50 50"><circle cx="27.8" cy="16.4" r="5.2" fill="none" stroke="#9393a0" stroke-width="2.6"/><circle cx="17.9" cy="33.6" r="5.2" fill="none" stroke="#9393a0" stroke-width="2.6"/><circle cx="37.2" cy="33.6" r="5.2" fill="none" stroke="#9393a0" stroke-width="2.6"/>
<path d="M14.9,26.2 A13.4,13.4 0 0 1 19.5,17.6" fill="none" stroke="#9393a0" stroke-width="2.6" stroke-linecap="round"/>
<path d="M36.1,17.6 A13.4,13.4 0 0 1 40.7,26.2" fill="none" stroke="#9393a0" stroke-width="2.6" stroke-linecap="round"/>
<path d="M24.8,38.6 A13.4,13.4 0 0 0 30.8,38.6" fill="none" stroke="#9393a0" stroke-width="2.6" stroke-linecap="round"/></svg>
<svg style="position:absolute;left:160.00px;top:865.00px;" width="50" height="50" viewBox="0 0 50 50"><polygon points="26.00,12.30 29.76,20.32 38.55,21.42 32.09,27.48 33.76,36.18 26.00,31.90 18.24,36.18 19.91,27.48 13.45,21.42 22.24,20.32" fill="none" stroke="#9393a0" stroke-width="2.6" stroke-linejoin="round"/></svg>
<svg style="position:absolute;left:160.00px;top:945.00px;" width="50" height="50" viewBox="0 0 50 50"><polygon points="38.50,24.60 38.44,25.84 38.26,27.06 34.90,27.33 34.58,28.20 34.19,29.03 33.72,29.82 35.64,32.59 34.81,33.51 33.89,34.34 32.90,35.08 30.33,32.89 29.50,33.28 28.63,33.60 27.73,33.82 27.14,37.14 25.90,37.20 24.66,37.14 23.44,36.96 23.17,33.60 22.30,33.28 21.47,32.89 20.68,32.42 17.91,34.34 16.99,33.51 16.16,32.59 15.42,31.60 17.61,29.03 17.22,28.20 16.90,27.33 16.68,26.43 13.36,25.84 13.30,24.60 13.36,23.36 13.54,22.14 16.90,21.87 17.22,21.00 17.61,20.17 18.08,19.38 16.16,16.61 16.99,15.69 17.91,14.86 18.90,14.12 21.47,16.31 22.30,15.92 23.17,15.60 24.07,15.38 24.66,12.06 25.90,12.00 27.14,12.06 28.36,12.24 28.63,15.60 29.50,15.92 30.33,16.31 31.12,16.78 33.89,14.86 34.81,15.69 35.64,16.61 36.38,17.60 34.19,20.17 34.58,21.00 34.90,21.87 35.12,22.77 38.44,23.36" fill="none" stroke="#9393a0" stroke-width="2.5" stroke-linejoin="round"/><circle cx="25.9" cy="24.6" r="4.6" fill="none" stroke="#9393a0" stroke-width="2.5"/></svg>
<div style="position:absolute;left:243.50px;top:520.00px;width:943.50px;height:399.75px;box-sizing:border-box;background:#1a1c20;border:2px solid #313238;border-radius:5px;"></div>
<div class="t" style="left:262.69px;top:538.26px;font-size:31px;color:#ccccdc;-webkit-text-stroke:1.0px #ccccdc;transform:scaleX(0.8798);transform-origin:left center;">ALERTS</div>
<div style="position:absolute;left:1063.00px;top:529.80px;width:105.75px;height:48.00px;box-sizing:border-box;border:2px solid #7ea5fd;border-radius:4px;"></div>
<div class="t" style="left:1079.85px;top:540.19px;font-size:26px;color:#7ea5fd;-webkit-text-stroke:0.7px #7ea5fd;transform:scaleX(0.9934);transform-origin:left center;">Select</div>
<svg style="position:absolute;left:313.50px;top:616.00px;" width="844" height="194" viewBox="0 0 844 194"><line x1="2.00" y1="2.50" x2="838.50" y2="2.50" stroke="rgba(240,250,255,0.12)" stroke-width="1.15"/><line x1="2.00" y1="47.50" x2="838.50" y2="47.50" stroke="rgba(240,250,255,0.12)" stroke-width="1.15"/><line x1="2.00" y1="92.50" x2="838.50" y2="92.50" stroke="rgba(240,250,255,0.12)" stroke-width="1.15"/><line x1="2.00" y1="137.50" x2="838.50" y2="137.50" stroke="rgba(240,250,255,0.12)" stroke-width="1.15"/><line x1="2.00" y1="182.50" x2="838.50" y2="182.50" stroke="rgba(240,250,255,0.12)" stroke-width="1.15"/><line x1="65.00" y1="2.00" x2="65.00" y2="190.00" stroke="rgba(240,250,255,0.12)" stroke-width="1.15"/><line x1="205.00" y1="2.00" x2="205.00" y2="190.00" stroke="rgba(240,250,255,0.12)" stroke-width="1.15"/><line x1="344.00" y1="2.00" x2="344.00" y2="190.00" stroke="rgba(240,250,255,0.12)" stroke-width="1.15"/><line x1="483.00" y1="2.00" x2="483.00" y2="190.00" stroke="rgba(240,250,255,0.12)" stroke-width="1.15"/><line x1="623.00" y1="2.00" x2="623.00" y2="190.00" stroke="rgba(240,250,255,0.12)" stroke-width="1.15"/><line x1="762.00" y1="2.00" x2="762.00" y2="190.00" stroke="rgba(240,250,255,0.12)" stroke-width="1.15"/><polygon points="2.00,92.00 831.50,92.00 831.50,182.00 2.00,182.00" fill="#87bf74" fill-opacity="0.09"/><polyline points="2.00,92.00 831.50,92.00" fill="none" stroke="#87bf74" stroke-width="2.2" stroke-linejoin="round"/></svg>
<div class="t" style="left:290.55px;top:605.21px;font-size:25.5px;color:#ccccdc;-webkit-text-stroke:0.45px #ccccdc;transform:scaleX(0.9700);transform-origin:left center;">2</div>
<div class="t" style="left:275.18px;top:650.21px;font-size:25.5px;color:#ccccdc;-webkit-text-stroke:0.45px #ccccdc;transform:scaleX(0.8218);transform-origin:left center;">1.5</div>
<div class="t" style="left:290.55px;top:695.21px;font-size:25.5px;color:#ccccdc;-webkit-text-stroke:0.45px #ccccdc;transform:scaleX(0.9700);transform-origin:left center;">1</div>
<div class="t" style="left:270.96px;top:740.21px;font-size:25.5px;color:#ccccdc;-webkit-text-stroke:0.45px #ccccdc;transform:scaleX(0.9402);transform-origin:left center;">0.5</div>
<div class="t" style="left:290.55px;top:785.21px;font-size:25.5px;color:#ccccdc;-webkit-text-stroke:0.45px #ccccdc;transform:scaleX(0.9700);transform-origin:left center;">0</div>
<div class="t" style="left:-121.34px;width:1000px;text-align:center;top:817.91px;font-size:25.5px;color:#ccccdc;-webkit-text-stroke:0.45px #ccccdc;transform:scaleX(1.0400);transform-origin:center center;">20:00</div>
<div class="t" style="left:18.07px;width:1000px;text-align:center;top:817.91px;font-size:25.5px;color:#ccccdc;-webkit-text-stroke:0.45px #ccccdc;transform:scaleX(1.0400);transform-origin:center center;">20:10</div>
<div class="t" style="left:157.49px;width:1000px;text-align:center;top:817.91px;font-size:25.5px;color:#ccccdc;-webkit-text-stroke:0.45px #ccccdc;transform:scaleX(1.0400);transform-origin:center center;">20:20</div>
<div class="t" style="left:296.91px;width:1000px;text-align:center;top:817.91px;font-size:25.5px;color:#ccccdc;-webkit-text-stroke:0.45px #ccccdc;transform:scaleX(1.0400);transform-origin:center center;">20:30</div>
<div class="t" style="left:436.32px;width:1000px;text-align:center;top:817.91px;font-size:25.5px;color:#ccccdc;-webkit-text-stroke:0.45px #ccccdc;transform:scaleX(1.0400);transform-origin:center center;">20:40</div>
<div class="t" style="left:575.74px;width:1000px;text-align:center;top:817.91px;font-size:25.5px;color:#ccccdc;-webkit-text-stroke:0.45px #ccccdc;transform:scaleX(1.0400);transform-origin:center center;">20:50</div>
<div style="position:absolute;left:270.00px;top:872.00px;width:28.00px;height:8.00px;box-sizing:border-box;background:#87bf74;border-radius:4px;"></div>
<div class="t" style="left:314.22px;top:862.71px;font-size:25.5px;color:#ccccdc;-webkit-text-stroke:0.45px #ccccdc;transform:scaleX(0.9623);transform-origin:left center;">avg</div>
<div style="position:absolute;left:1202.75px;top:520.00px;width:943.50px;height:399.75px;box-sizing:border-box;background:#1a1c20;border:2px solid #313238;border-radius:5px;"></div>
<div class="t" style="left:1221.94px;top:538.26px;font-size:31px;color:#ccccdc;-webkit-text-stroke:1.0px #ccccdc;transform:scaleX(0.8834);transform-origin:left center;">ALERTS_FOR_STATE</div>
<div style="position:absolute;left:2022.25px;top:529.80px;width:105.75px;height:48.00px;box-sizing:border-box;border:2px solid #7ea5fd;border-radius:4px;"></div>
<div class="t" style="left:2039.10px;top:540.19px;font-size:26px;color:#7ea5fd;-webkit-text-stroke:0.7px #7ea5fd;transform:scaleX(0.9934);transform-origin:left center;">Select</div>
<svg style="position:absolute;left:1316.75px;top:616.00px;" width="800" height="194" viewBox="0 0 800 194"><line x1="2.00" y1="14.50" x2="794.50" y2="14.50" stroke="rgba(240,250,255,0.12)" stroke-width="1.15"/><line x1="2.00" y1="54.50" x2="794.50" y2="54.50" stroke="rgba(240,250,255,0.12)" stroke-width="1.15"/><line x1="2.00" y1="94.50" x2="794.50" y2="94.50" stroke="rgba(240,250,255,0.12)" stroke-width="1.15"/><line x1="2.00" y1="134.50" x2="794.50" y2="134.50" stroke="rgba(240,250,255,0.12)" stroke-width="1.15"/><line x1="2.00" y1="173.50" x2="794.50" y2="173.50" stroke="rgba(240,250,255,0.12)" stroke-width="1.15"/><line x1="61.75" y1="2.00" x2="61.75" y2="190.00" stroke="rgba(240,250,255,0.12)" stroke-width="1.15"/><line x1="193.75" y1="2.00" x2="193.75" y2="190.00" stroke="rgba(240,250,255,0.12)" stroke-width="1.15"/><line x1="325.75" y1="2.00" x2="325.75" y2="190.00" stroke="rgba(240,250,255,0.12)" stroke-width="1.15"/><line x1="457.75" y1="2.00" x2="457.75" y2="190.00" stroke="rgba(240,250,255,0.12)" stroke-width="1.15"/><line x1="589.75" y1="2.00" x2="589.75" y2="190.00" stroke="rgba(240,250,255,0.12)" stroke-width="1.15"/><line x1="722.75" y1="2.00" x2="722.75" y2="190.00" stroke="rgba(240,250,255,0.12)" stroke-width="1.15"/><polygon points="2.00,166.90 576.01,166.90 590.11,17.10 629.03,17.10 641.71,166.90 787.50,166.90 787.50,182.00 2.00,182.00" fill="#ebcf48" fill-opacity="0.09"/><polyline points="2.00,166.90 576.01,166.90 590.11,17.10 629.03,17.10 641.71,166.90 787.50,166.90" fill="none" stroke="#ebcf48" stroke-width="2.2" stroke-linejoin="round"/></svg>
<div class="t" style="left:1230.65px;top:617.21px;font-size:25.5px;color:#ccccdc;-webkit-text-stroke:0.45px #ccccdc;transform:scaleX(0.9042);transform-origin:left center;">1.75 Bil</div>
<div class="t" style="left:1230.65px;top:657.41px;font-size:25.5px;color:#ccccdc;-webkit-text-stroke:0.45px #ccccdc;transform:scaleX(0.9042);transform-origin:left center;">1.75 Bil</div>
<div class="t" style="left:1230.65px;top:697.31px;font-size:25.5px;color:#ccccdc;-webkit-text-stroke:0.45px #ccccdc;transform:scaleX(0.9042);transform-origin:left center;">1.75 Bil</div>
<div class="t" style="left:1230.65px;top:737.21px;font-size:25.5px;color:#ccccdc;-webkit-text-stroke:0.45px #ccccdc;transform:scaleX(0.9042);transform-origin:left center;">1.75 Bil</div>
<div class="t" style="left:1230.65px;top:777.11px;font-size:25.5px;color:#ccccdc;-webkit-text-stroke:0.45px #ccccdc;transform:scaleX(0.9042);transform-origin:left center;">1.75 Bil</div>
<div class="t" style="left:878.58px;width:1000px;text-align:center;top:817.91px;font-size:25.5px;color:#ccccdc;-webkit-text-stroke:0.45px #ccccdc;transform:scaleX(1.0400);transform-origin:center center;">20:00</div>
<div class="t" style="left:1010.67px;width:1000px;text-align:center;top:817.91px;font-size:25.5px;color:#ccccdc;-webkit-text-stroke:0.45px #ccccdc;transform:scaleX(1.0400);transform-origin:center center;">20:10</div>
<div class="t" style="left:1142.75px;width:1000px;text-align:center;top:817.91px;font-size:25.5px;color:#ccccdc;-webkit-text-stroke:0.45px #ccccdc;transform:scaleX(1.0400);transform-origin:center center;">20:20</div>
<div class="t" style="left:1274.83px;width:1000px;text-align:center;top:817.91px;font-size:25.5px;color:#ccccdc;-webkit-text-stroke:0.45px #ccccdc;transform:scaleX(1.0400);transform-origin:center center;">20:30</div>
<div class="t" style="left:1406.92px;width:1000px;text-align:center;top:817.91px;font-size:25.5px;color:#ccccdc;-webkit-text-stroke:0.45px #ccccdc;transform:scaleX(1.0400);transform-origin:center center;">20:40</div>
<div class="t" style="left:1539.00px;width:1000px;text-align:center;top:817.91px;font-size:25.5px;color:#ccccdc;-webkit-text-stroke:0.45px #ccccdc;transform:scaleX(1.0400);transform-origin:center center;">20:50</div>
<div style="position:absolute;left:1229.25px;top:872.00px;width:28.00px;height:8.00px;box-sizing:border-box;background:#ebcf48;border-radius:4px;"></div>
<div class="t" style="left:1273.47px;top:862.71px;font-size:25.5px;color:#ccccdc;-webkit-text-stroke:0.45px #ccccdc;transform:scaleX(0.9623);transform-origin:left center;">avg</div>
<div style="position:absolute;left:2160.75px;top:520.00px;width:943.50px;height:399.75px;box-sizing:border-box;background:#1a1c20;border:2px solid #313238;border-radius:5px;"></div>
<div class="t" style="left:2179.98px;top:538.26px;font-size:31px;color:#ccccdc;-webkit-text-stroke:1.0px #ccccdc;transform:scaleX(0.9663);transform-origin:left center;">alloy_build_info</div>
<div style="position:absolute;left:2980.25px;top:529.80px;width:105.75px;height:48.00px;box-sizing:border-box;border:2px solid #7ea5fd;border-radius:4px;"></div>
<div class="t" style="left:2997.10px;top:540.19px;font-size:26px;color:#7ea5fd;-webkit-text-stroke:0.7px #7ea5fd;transform:scaleX(0.9934);transform-origin:left center;">Select</div>
<svg style="position:absolute;left:2230.75px;top:616.00px;" width="844" height="194" viewBox="0 0 844 194"><line x1="2.00" y1="2.50" x2="838.50" y2="2.50" stroke="rgba(240,250,255,0.12)" stroke-width="1.15"/><line x1="2.00" y1="47.50" x2="838.50" y2="47.50" stroke="rgba(240,250,255,0.12)" stroke-width="1.15"/><line x1="2.00" y1="92.50" x2="838.50" y2="92.50" stroke="rgba(240,250,255,0.12)" stroke-width="1.15"/><line x1="2.00" y1="137.50" x2="838.50" y2="137.50" stroke="rgba(240,250,255,0.12)" stroke-width="1.15"/><line x1="2.00" y1="182.50" x2="838.50" y2="182.50" stroke="rgba(240,250,255,0.12)" stroke-width="1.15"/><line x1="64.75" y1="2.00" x2="64.75" y2="190.00" stroke="rgba(240,250,255,0.12)" stroke-width="1.15"/><line x1="204.75" y1="2.00" x2="204.75" y2="190.00" stroke="rgba(240,250,255,0.12)" stroke-width="1.15"/><line x1="343.75" y1="2.00" x2="343.75" y2="190.00" stroke="rgba(240,250,255,0.12)" stroke-width="1.15"/><line x1="483.75" y1="2.00" x2="483.75" y2="190.00" stroke="rgba(240,250,255,0.12)" stroke-width="1.15"/><line x1="622.75" y1="2.00" x2="622.75" y2="190.00" stroke="rgba(240,250,255,0.12)" stroke-width="1.15"/><line x1="761.75" y1="2.00" x2="761.75" y2="190.00" stroke="rgba(240,250,255,0.12)" stroke-width="1.15"/><polygon points="2.00,92.00 831.50,92.00 831.50,182.00 2.00,182.00" fill="#94b6f8" fill-opacity="0.09"/><polyline points="2.00,92.00 831.50,92.00" fill="none" stroke="#94b6f8" stroke-width="2.2" stroke-linejoin="round"/></svg>
<div class="t" style="left:2207.80px;top:605.21px;font-size:25.5px;color:#ccccdc;-webkit-text-stroke:0.45px #ccccdc;transform:scaleX(0.9700);transform-origin:left center;">2</div>
<div class="t" style="left:2192.43px;top:650.21px;font-size:25.5px;color:#ccccdc;-webkit-text-stroke:0.45px #ccccdc;transform:scaleX(0.8218);transform-origin:left center;">1.5</div>
<div class="t" style="left:2207.80px;top:695.21px;font-size:25.5px;color:#ccccdc;-webkit-text-stroke:0.45px #ccccdc;transform:scaleX(0.9700);transform-origin:left center;">1</div>
<div class="t" style="left:2188.21px;top:740.21px;font-size:25.5px;color:#ccccdc;-webkit-text-stroke:0.45px #ccccdc;transform:scaleX(0.9402);transform-origin:left center;">0.5</div>
<div class="t" style="left:2207.80px;top:785.21px;font-size:25.5px;color:#ccccdc;-webkit-text-stroke:0.45px #ccccdc;transform:scaleX(0.9700);transform-origin:left center;">0</div>
<div class="t" style="left:1795.91px;width:1000px;text-align:center;top:817.91px;font-size:25.5px;color:#ccccdc;-webkit-text-stroke:0.45px #ccccdc;transform:scaleX(1.0400);transform-origin:center center;">20:00</div>
<div class="t" style="left:1935.32px;width:1000px;text-align:center;top:817.91px;font-size:25.5px;color:#ccccdc;-webkit-text-stroke:0.45px #ccccdc;transform:scaleX(1.0400);transform-origin:center center;">20:10</div>
<div class="t" style="left:2074.74px;width:1000px;text-align:center;top:817.91px;font-size:25.5px;color:#ccccdc;-webkit-text-stroke:0.45px #ccccdc;transform:scaleX(1.0400);transform-origin:center center;">20:20</div>
<div class="t" style="left:2214.16px;width:1000px;text-align:center;top:817.91px;font-size:25.5px;color:#ccccdc;-webkit-text-stroke:0.45px #ccccdc;transform:scaleX(1.0400);transform-origin:center center;">20:30</div>
<div class="t" style="left:2353.57px;width:1000px;text-align:center;top:817.91px;font-size:25.5px;color:#ccccdc;-webkit-text-stroke:0.45px #ccccdc;transform:scaleX(1.0400);transform-origin:center center;">20:40</div>
<div class="t" style="left:2492.99px;width:1000px;text-align:center;top:817.91px;font-size:25.5px;color:#ccccdc;-webkit-text-stroke:0.45px #ccccdc;transform:scaleX(1.0400);transform-origin:center center;">20:50</div>
<div style="position:absolute;left:2187.25px;top:872.00px;width:28.00px;height:8.00px;box-sizing:border-box;background:#94b6f8;border-radius:4px;"></div>
<div class="t" style="left:2231.47px;top:862.71px;font-size:25.5px;color:#ccccdc;-webkit-text-stroke:0.45px #ccccdc;transform:scaleX(0.9623);transform-origin:left center;">avg</div>
<div style="position:absolute;left:243.50px;top:935.75px;width:943.50px;height:399.75px;box-sizing:border-box;background:#1a1c20;border:2px solid #313238;border-radius:5px;"></div>
<div class="t" style="left:262.74px;top:954.01px;font-size:31px;color:#ccccdc;-webkit-text-stroke:1.0px #ccccdc;transform:scaleX(0.9894);transform-origin:left center;">asserts_artifact_info</div>
<div style="position:absolute;left:1063.00px;top:945.55px;width:105.75px;height:48.00px;box-sizing:border-box;border:2px solid #7ea5fd;border-radius:4px;"></div>
<div class="t" style="left:1079.85px;top:955.94px;font-size:26px;color:#7ea5fd;-webkit-text-stroke:0.7px #7ea5fd;transform:scaleX(0.9934);transform-origin:left center;">Select</div>
<svg style="position:absolute;left:313.50px;top:1031.75px;" width="844" height="194" viewBox="0 0 844 194"><line x1="2.00" y1="1.75" x2="838.50" y2="1.75" stroke="rgba(240,250,255,0.12)" stroke-width="1.15"/><line x1="2.00" y1="46.75" x2="838.50" y2="46.75" stroke="rgba(240,250,255,0.12)" stroke-width="1.15"/><line x1="2.00" y1="91.75" x2="838.50" y2="91.75" stroke="rgba(240,250,255,0.12)" stroke-width="1.15"/><line x1="2.00" y1="136.75" x2="838.50" y2="136.75" stroke="rgba(240,250,255,0.12)" stroke-width="1.15"/><line x1="2.00" y1="181.75" x2="838.50" y2="181.75" stroke="rgba(240,250,255,0.12)" stroke-width="1.15"/><line x1="65.00" y1="2.00" x2="65.00" y2="190.00" stroke="rgba(240,250,255,0.12)" stroke-width="1.15"/><line x1="205.00" y1="2.00" x2="205.00" y2="190.00" stroke="rgba(240,250,255,0.12)" stroke-width="1.15"/><line x1="344.00" y1="2.00" x2="344.00" y2="190.00" stroke="rgba(240,250,255,0.12)" stroke-width="1.15"/><line x1="483.00" y1="2.00" x2="483.00" y2="190.00" stroke="rgba(240,250,255,0.12)" stroke-width="1.15"/><line x1="623.00" y1="2.00" x2="623.00" y2="190.00" stroke="rgba(240,250,255,0.12)" stroke-width="1.15"/><line x1="762.00" y1="2.00" x2="762.00" y2="190.00" stroke="rgba(240,250,255,0.12)" stroke-width="1.15"/><polygon points="2.00,92.00 831.50,92.00 831.50,182.00 2.00,182.00" fill="#ee8234" fill-opacity="0.09"/><polyline points="2.00,92.00 831.50,92.00" fill="none" stroke="#ee8234" stroke-width="2.2" stroke-linejoin="round"/></svg>
<div class="t" style="left:290.55px;top:1020.96px;font-size:25.5px;color:#ccccdc;-webkit-text-stroke:0.45px #ccccdc;transform:scaleX(0.9700);transform-origin:left center;">2</div>
<div class="t" style="left:275.18px;top:1065.96px;font-size:25.5px;color:#ccccdc;-webkit-text-stroke:0.45px #ccccdc;transform:scaleX(0.8218);transform-origin:left center;">1.5</div>
<div class="t" style="left:290.55px;top:1110.96px;font-size:25.5px;color:#ccccdc;-webkit-text-stroke:0.45px #ccccdc;transform:scaleX(0.9700);transform-origin:left center;">1</div>
<div class="t" style="left:270.96px;top:1155.96px;font-size:25.5px;color:#ccccdc;-webkit-text-stroke:0.45px #ccccdc;transform:scaleX(0.9402);transform-origin:left center;">0.5</div>
<div class="t" style="left:290.55px;top:1200.96px;font-size:25.5px;color:#ccccdc;-webkit-text-stroke:0.45px #ccccdc;transform:scaleX(0.9700);transform-origin:left center;">0</div>
<div class="t" style="left:-121.34px;width:1000px;text-align:center;top:1233.66px;font-size:25.5px;color:#ccccdc;-webkit-text-stroke:0.45px #ccccdc;transform:scaleX(1.0400);transform-origin:center center;">20:00</div>
<div class="t" style="left:18.07px;width:1000px;text-align:center;top:1233.66px;font-size:25.5px;color:#ccccdc;-webkit-text-stroke:0.45px #ccccdc;transform:scaleX(1.0400);transform-origin:center center;">20:10</div>
<div class="t" style="left:157.49px;width:1000px;text-align:center;top:1233.66px;font-size:25.5px;color:#ccccdc;-webkit-text-stroke:0.45px #ccccdc;transform:scaleX(1.0400);transform-origin:center center;">20:20</div>
<div class="t" style="left:296.91px;width:1000px;text-align:center;top:1233.66px;font-size:25.5px;color:#ccccdc;-webkit-text-stroke:0.45px #ccccdc;transform:scaleX(1.0400);transform-origin:center center;">20:30</div>
<div class="t" style="left:436.32px;width:1000px;text-align:center;top:1233.66px;font-size:25.5px;color:#ccccdc;-webkit-text-stroke:0.45px #ccccdc;transform:scaleX(1.0400);transform-origin:center center;">20:40</div>
<div class="t" style="left:575.74px;width:1000px;text-align:center;top:1233.66px;font-size:25.5px;color:#ccccdc;-webkit-text-stroke:0.45px #ccccdc;transform:scaleX(1.0400);transform-origin:center center;">20:50</div>
<div style="position:absolute;left:270.00px;top:1287.75px;width:28.00px;height:8.00px;box-sizing:border-box;background:#ee8234;border-radius:4px;"></div>
<div class="t" style="left:314.22px;top:1278.46px;font-size:25.5px;color:#ccccdc;-webkit-text-stroke:0.45px #ccccdc;transform:scaleX(0.9623);transform-origin:left center;">avg</div>
<div style="position:absolute;left:1202.75px;top:935.75px;width:943.50px;height:399.75px;box-sizing:border-box;background:#1a1c20;border:2px solid #313238;border-radius:5px;"></div>
<div class="t" style="left:1222.00px;top:954.01px;font-size:31px;color:#ccccdc;-webkit-text-stroke:1.0px #ccccdc;transform:scaleX(0.9948);transform-origin:left center;">asserts:alerts</div>
<div style="position:absolute;left:2022.25px;top:945.55px;width:105.75px;height:48.00px;box-sizing:border-box;border:2px solid #7ea5fd;border-radius:4px;"></div>
<div class="t" style="left:2039.10px;top:955.94px;font-size:26px;color:#7ea5fd;-webkit-text-stroke:0.7px #7ea5fd;transform:scaleX(0.9934);transform-origin:left center;">Select</div>
<svg style="position:absolute;left:1285.75px;top:1031.75px;" width="831" height="194" viewBox="0 0 831 194"><line x1="2.00" y1="28.75" x2="825.50" y2="28.75" stroke="rgba(240,250,255,0.12)" stroke-width="1.15"/><line x1="2.00" y1="79.75" x2="825.50" y2="79.75" stroke="rgba(240,250,255,0.12)" stroke-width="1.15"/><line x1="2.00" y1="131.75" x2="825.50" y2="131.75" stroke="rgba(240,250,255,0.12)" stroke-width="1.15"/><line x1="2.00" y1="182.75" x2="825.50" y2="182.75" stroke="rgba(240,250,255,0.12)" stroke-width="1.15"/><line x1="63.75" y1="2.00" x2="63.75" y2="190.00" stroke="rgba(240,250,255,0.12)" stroke-width="1.15"/><line x1="201.75" y1="2.00" x2="201.75" y2="190.00" stroke="rgba(240,250,255,0.12)" stroke-width="1.15"/><line x1="338.75" y1="2.00" x2="338.75" y2="190.00" stroke="rgba(240,250,255,0.12)" stroke-width="1.15"/><line x1="475.75" y1="2.00" x2="475.75" y2="190.00" stroke="rgba(240,250,255,0.12)" stroke-width="1.15"/><line x1="612.75" y1="2.00" x2="612.75" y2="190.00" stroke="rgba(240,250,255,0.12)" stroke-width="1.15"/><line x1="750.75" y1="2.00" x2="750.75" y2="190.00" stroke="rgba(240,250,255,0.12)" stroke-width="1.15"/><polygon points="2.00,92.30 818.50,92.30 818.50,182.00 2.00,182.00" fill="#e35464" fill-opacity="0.09"/><polyline points="2.00,92.30 818.50,92.30" fill="none" stroke="#e35464" stroke-width="2.2" stroke-linejoin="round"/></svg>
<div class="t" style="left:1229.86px;top:1047.46px;font-size:25.5px;color:#ccccdc;-webkit-text-stroke:0.45px #ccccdc;transform:scaleX(0.9411);transform-origin:left center;">3 Bil</div>
<div class="t" style="left:1229.86px;top:1098.36px;font-size:25.5px;color:#ccccdc;-webkit-text-stroke:0.45px #ccccdc;transform:scaleX(0.9411);transform-origin:left center;">2 Bil</div>
<div class="t" style="left:1232.95px;top:1150.46px;font-size:25.5px;color:#ccccdc;-webkit-text-stroke:0.45px #ccccdc;transform:scaleX(0.8792);transform-origin:left center;">1 Bil</div>
<div class="t" style="left:1262.80px;top:1201.36px;font-size:25.5px;color:#ccccdc;-webkit-text-stroke:0.45px #ccccdc;transform:scaleX(0.9700);transform-origin:left center;">0</div>
<div class="t" style="left:849.92px;width:1000px;text-align:center;top:1233.66px;font-size:25.5px;color:#ccccdc;-webkit-text-stroke:0.45px #ccccdc;transform:scaleX(1.0400);transform-origin:center center;">20:00</div>
<div class="t" style="left:987.17px;width:1000px;text-align:center;top:1233.66px;font-size:25.5px;color:#ccccdc;-webkit-text-stroke:0.45px #ccccdc;transform:scaleX(1.0400);transform-origin:center center;">20:10</div>
<div class="t" style="left:1124.42px;width:1000px;text-align:center;top:1233.66px;font-size:25.5px;color:#ccccdc;-webkit-text-stroke:0.45px #ccccdc;transform:scaleX(1.0400);transform-origin:center center;">20:20</div>
<div class="t" style="left:1261.67px;width:1000px;text-align:center;top:1233.66px;font-size:25.5px;color:#ccccdc;-webkit-text-stroke:0.45px #ccccdc;transform:scaleX(1.0400);transform-origin:center center;">20:30</div>
<div class="t" style="left:1398.92px;width:1000px;text-align:center;top:1233.66px;font-size:25.5px;color:#ccccdc;-webkit-text-stroke:0.45px #ccccdc;transform:scaleX(1.0400);transform-origin:center center;">20:40</div>
<div class="t" style="left:1536.17px;width:1000px;text-align:center;top:1233.66px;font-size:25.5px;color:#ccccdc;-webkit-text-stroke:0.45px #ccccdc;transform:scaleX(1.0400);transform-origin:center center;">20:50</div>
<div style="position:absolute;left:1229.25px;top:1287.75px;width:28.00px;height:8.00px;box-sizing:border-box;background:#e35464;border-radius:4px;"></div>
<div class="t" style="left:1273.47px;top:1278.46px;font-size:25.5px;color:#ccccdc;-webkit-text-stroke:0.45px #ccccdc;transform:scaleX(0.9623);transform-origin:left center;">avg</div>
<div style="position:absolute;left:2160.75px;top:935.75px;width:943.50px;height:399.75px;box-sizing:border-box;background:#1a1c20;border:2px solid #313238;border-radius:5px;"></div>
<div class="t" style="left:2180.00px;top:954.01px;font-size:31px;color:#ccccdc;-webkit-text-stroke:1.0px #ccccdc;transform:scaleX(0.9977);transform-origin:left center;">asserts:client:error:ratio:threshold_by_stddev</div>
<div style="position:absolute;left:2980.25px;top:945.55px;width:105.75px;height:48.00px;box-sizing:border-box;border:2px solid #7ea5fd;border-radius:4px;"></div>
<div class="t" style="left:2997.10px;top:955.94px;font-size:26px;color:#7ea5fd;-webkit-text-stroke:0.7px #7ea5fd;transform:scaleX(0.9934);transform-origin:left center;">Select</div>
<svg style="position:absolute;left:2210.35px;top:1031.75px;" width="864" height="194" viewBox="0 0 864 194"><line x1="2.00" y1="1.75" x2="858.90" y2="1.75" stroke="rgba(240,250,255,0.12)" stroke-width="1.15"/><line x1="2.00" y1="46.75" x2="858.90" y2="46.75" stroke="rgba(240,250,255,0.12)" stroke-width="1.15"/><line x1="2.00" y1="91.75" x2="858.90" y2="91.75" stroke="rgba(240,250,255,0.12)" stroke-width="1.15"/><line x1="2.00" y1="136.75" x2="858.90" y2="136.75" stroke="rgba(240,250,255,0.12)" stroke-width="1.15"/><line x1="2.00" y1="181.75" x2="858.90" y2="181.75" stroke="rgba(240,250,255,0.12)" stroke-width="1.15"/><line x1="67.15" y1="2.00" x2="67.15" y2="190.00" stroke="rgba(240,250,255,0.12)" stroke-width="1.15"/><line x1="209.15" y1="2.00" x2="209.15" y2="190.00" stroke="rgba(240,250,255,0.12)" stroke-width="1.15"/><line x1="352.15" y1="2.00" x2="352.15" y2="190.00" stroke="rgba(240,250,255,0.12)" stroke-width="1.15"/><line x1="495.15" y1="2.00" x2="495.15" y2="190.00" stroke="rgba(240,250,255,0.12)" stroke-width="1.15"/><line x1="638.15" y1="2.00" x2="638.15" y2="190.00" stroke="rgba(240,250,255,0.12)" stroke-width="1.15"/><line x1="781.15" y1="2.00" x2="781.15" y2="190.00" stroke="rgba(240,250,255,0.12)" stroke-width="1.15"/><polygon points="2.00,92.00 851.90,92.00 851.90,182.00 2.00,182.00" fill="#6693ea" fill-opacity="0.09"/><polyline points="2.00,92.00 851.90,92.00" fill="none" stroke="#6693ea" stroke-width="2.2" stroke-linejoin="round"/></svg>
<div class="t" style="left:2187.40px;top:1020.96px;font-size:25.5px;color:#ccccdc;-webkit-text-stroke:0.45px #ccccdc;transform:scaleX(0.9700);transform-origin:left center;">4</div>
<div class="t" style="left:2187.40px;top:1065.96px;font-size:25.5px;color:#ccccdc;-webkit-text-stroke:0.45px #ccccdc;transform:scaleX(0.9700);transform-origin:left center;">3</div>
<div class="t" style="left:2187.40px;top:1110.96px;font-size:25.5px;color:#ccccdc;-webkit-text-stroke:0.45px #ccccdc;transform:scaleX(0.9700);transform-origin:left center;">2</div>
<div class="t" style="left:2187.40px;top:1155.96px;font-size:25.5px;color:#ccccdc;-webkit-text-stroke:0.45px #ccccdc;transform:scaleX(0.9700);transform-origin:left center;">1</div>
<div class="t" style="left:2187.40px;top:1200.96px;font-size:25.5px;color:#ccccdc;-webkit-text-stroke:0.45px #ccccdc;transform:scaleX(0.9700);transform-origin:left center;">0</div>
<div class="t" style="left:1777.05px;width:1000px;text-align:center;top:1233.66px;font-size:25.5px;color:#ccccdc;-webkit-text-stroke:0.45px #ccccdc;transform:scaleX(1.0400);transform-origin:center center;">20:00</div>
<div class="t" style="left:1919.86px;width:1000px;text-align:center;top:1233.66px;font-size:25.5px;color:#ccccdc;-webkit-text-stroke:0.45px #ccccdc;transform:scaleX(1.0400);transform-origin:center center;">20:10</div>
<div class="t" style="left:2062.68px;width:1000px;text-align:center;top:1233.66px;font-size:25.5px;color:#ccccdc;-webkit-text-stroke:0.45px #ccccdc;transform:scaleX(1.0400);transform-origin:center center;">20:20</div>
<div class="t" style="left:2205.50px;width:1000px;text-align:center;top:1233.66px;font-size:25.5px;color:#ccccdc;-webkit-text-stroke:0.45px #ccccdc;transform:scaleX(1.0400);transform-origin:center center;">20:30</div>
<div class="t" style="left:2348.31px;width:1000px;text-align:center;top:1233.66px;font-size:25.5px;color:#ccccdc;-webkit-text-stroke:0.45px #ccccdc;transform:scaleX(1.0400);transform-origin:center center;">20:40</div>
<div class="t" style="left:2491.13px;width:1000px;text-align:center;top:1233.66px;font-size:25.5px;color:#ccccdc;-webkit-text-stroke:0.45px #ccccdc;transform:scaleX(1.0400);transform-origin:center center;">20:50</div>
<div style="position:absolute;left:2187.25px;top:1287.75px;width:28.00px;height:8.00px;box-sizing:border-box;background:#6693ea;border-radius:4px;"></div>
<div class="t" style="left:2231.47px;top:1278.46px;font-size:25.5px;color:#ccccdc;-webkit-text-stroke:0.45px #ccccdc;transform:scaleX(0.9623);transform-origin:left center;">avg</div>
<div style="position:absolute;left:243.50px;top:1351.50px;width:943.50px;height:399.75px;box-sizing:border-box;background:#1a1c20;border:2px solid #313238;border-radius:5px;"></div>
<div class="t" style="left:262.75px;top:1369.76px;font-size:31px;color:#ccccdc;-webkit-text-stroke:1.0px #ccccdc;transform:scaleX(1.0020);transform-origin:left center;">asserts:client:error:ratio:threshold_margin</div>
<div style="position:absolute;left:1063.00px;top:1361.30px;width:105.75px;height:48.00px;box-sizing:border-box;border:2px solid #7ea5fd;border-radius:4px;"></div>
<div class="t" style="left:1079.85px;top:1371.69px;font-size:26px;color:#7ea5fd;-webkit-text-stroke:0.7px #7ea5fd;transform:scaleX(0.9934);transform-origin:left center;">Select</div>
<svg style="position:absolute;left:316.10px;top:1447.50px;" width="841" height="194" viewBox="0 0 841 194"><line x1="2.00" y1="2.00" x2="835.90" y2="2.00" stroke="rgba(240,250,255,0.12)" stroke-width="1.15"/><line x1="2.00" y1="47.00" x2="835.90" y2="47.00" stroke="rgba(240,250,255,0.12)" stroke-width="1.15"/><line x1="2.00" y1="92.00" x2="835.90" y2="92.00" stroke="rgba(240,250,255,0.12)" stroke-width="1.15"/><line x1="2.00" y1="137.00" x2="835.90" y2="137.00" stroke="rgba(240,250,255,0.12)" stroke-width="1.15"/><line x1="2.00" y1="182.00" x2="835.90" y2="182.00" stroke="rgba(240,250,255,0.12)" stroke-width="1.15"/><line x1="65.40" y1="2.00" x2="65.40" y2="190.00" stroke="rgba(240,250,255,0.12)" stroke-width="1.15"/><line x1="204.40" y1="2.00" x2="204.40" y2="190.00" stroke="rgba(240,250,255,0.12)" stroke-width="1.15"/><line x1="343.40" y1="2.00" x2="343.40" y2="190.00" stroke="rgba(240,250,255,0.12)" stroke-width="1.15"/><line x1="482.40" y1="2.00" x2="482.40" y2="190.00" stroke="rgba(240,250,255,0.12)" stroke-width="1.15"/><line x1="620.40" y1="2.00" x2="620.40" y2="190.00" stroke="rgba(240,250,255,0.12)" stroke-width="1.15"/><line x1="759.40" y1="2.00" x2="759.40" y2="190.00" stroke="rgba(240,250,255,0.12)" stroke-width="1.15"/><polygon points="2.00,92.00 828.90,92.00 828.90,182.00 2.00,182.00" fill="#b07cd8" fill-opacity="0.09"/><polyline points="2.00,92.00 828.90,92.00" fill="none" stroke="#b07cd8" stroke-width="2.2" stroke-linejoin="round"/></svg>
<div class="t" style="left:272.02px;top:1436.71px;font-size:25.5px;color:#ccccdc;-webkit-text-stroke:0.45px #ccccdc;transform:scaleX(0.9834);transform-origin:left center;">0.4</div>
<div class="t" style="left:272.02px;top:1481.71px;font-size:25.5px;color:#ccccdc;-webkit-text-stroke:0.45px #ccccdc;transform:scaleX(0.9834);transform-origin:left center;">0.3</div>
<div class="t" style="left:272.02px;top:1526.71px;font-size:25.5px;color:#ccccdc;-webkit-text-stroke:0.45px #ccccdc;transform:scaleX(0.9834);transform-origin:left center;">0.2</div>
<div class="t" style="left:274.31px;top:1571.71px;font-size:25.5px;color:#ccccdc;-webkit-text-stroke:0.45px #ccccdc;transform:scaleX(0.9193);transform-origin:left center;">0.1</div>
<div class="t" style="left:293.15px;top:1616.71px;font-size:25.5px;color:#ccccdc;-webkit-text-stroke:0.45px #ccccdc;transform:scaleX(0.9700);transform-origin:left center;">0</div>
<div class="t" style="left:-118.94px;width:1000px;text-align:center;top:1649.41px;font-size:25.5px;color:#ccccdc;-webkit-text-stroke:0.45px #ccccdc;transform:scaleX(1.0400);transform-origin:center center;">20:00</div>
<div class="t" style="left:20.04px;width:1000px;text-align:center;top:1649.41px;font-size:25.5px;color:#ccccdc;-webkit-text-stroke:0.45px #ccccdc;transform:scaleX(1.0400);transform-origin:center center;">20:10</div>
<div class="t" style="left:159.03px;width:1000px;text-align:center;top:1649.41px;font-size:25.5px;color:#ccccdc;-webkit-text-stroke:0.45px #ccccdc;transform:scaleX(1.0400);transform-origin:center center;">20:20</div>
<div class="t" style="left:298.01px;width:1000px;text-align:center;top:1649.41px;font-size:25.5px;color:#ccccdc;-webkit-text-stroke:0.45px #ccccdc;transform:scaleX(1.0400);transform-origin:center center;">20:30</div>
<div class="t" style="left:436.99px;width:1000px;text-align:center;top:1649.41px;font-size:25.5px;color:#ccccdc;-webkit-text-stroke:0.45px #ccccdc;transform:scaleX(1.0400);transform-origin:center center;">20:40</div>
<div class="t" style="left:575.98px;width:1000px;text-align:center;top:1649.41px;font-size:25.5px;color:#ccccdc;-webkit-text-stroke:0.45px #ccccdc;transform:scaleX(1.0400);transform-origin:center center;">20:50</div>
<div style="position:absolute;left:270.00px;top:1703.50px;width:28.00px;height:8.00px;box-sizing:border-box;background:#b07cd8;border-radius:4px;"></div>
<div class="t" style="left:314.22px;top:1694.21px;font-size:25.5px;color:#ccccdc;-webkit-text-stroke:0.45px #ccccdc;transform:scaleX(0.9623);transform-origin:left center;">avg</div>
<div style="position:absolute;left:1202.75px;top:1351.50px;width:943.50px;height:399.75px;box-sizing:border-box;background:#1a1c20;border:2px solid #313238;border-radius:5px;"></div>
<div class="t" style="left:1222.00px;top:1369.76px;font-size:31px;color:#ccccdc;-webkit-text-stroke:1.0px #ccccdc;transform:scaleX(0.9917);transform-origin:left center;">asserts:container_memory</div>
<div style="position:absolute;left:2022.25px;top:1361.30px;width:105.75px;height:48.00px;box-sizing:border-box;border:2px solid #7ea5fd;border-radius:4px;"></div>
<div class="t" style="left:2039.10px;top:1371.69px;font-size:26px;color:#7ea5fd;-webkit-text-stroke:0.7px #7ea5fd;transform:scaleX(0.9934);transform-origin:left center;">Select</div>
<svg style="position:absolute;left:1307.05px;top:1447.50px;" width="810" height="194" viewBox="0 0 810 194"><line x1="2.00" y1="3.00" x2="804.20" y2="3.00" stroke="rgba(240,250,255,0.12)" stroke-width="1.15"/><line x1="2.00" y1="41.00" x2="804.20" y2="41.00" stroke="rgba(240,250,255,0.12)" stroke-width="1.15"/><line x1="2.00" y1="78.00" x2="804.20" y2="78.00" stroke="rgba(240,250,255,0.12)" stroke-width="1.15"/><line x1="2.00" y1="116.00" x2="804.20" y2="116.00" stroke="rgba(240,250,255,0.12)" stroke-width="1.15"/><line x1="2.00" y1="153.00" x2="804.20" y2="153.00" stroke="rgba(240,250,255,0.12)" stroke-width="1.15"/><line x1="62.45" y1="2.00" x2="62.45" y2="190.00" stroke="rgba(240,250,255,0.12)" stroke-width="1.15"/><line x1="196.45" y1="2.00" x2="196.45" y2="190.00" stroke="rgba(240,250,255,0.12)" stroke-width="1.15"/><line x1="330.45" y1="2.00" x2="330.45" y2="190.00" stroke="rgba(240,250,255,0.12)" stroke-width="1.15"/><line x1="463.45" y1="2.00" x2="463.45" y2="190.00" stroke="rgba(240,250,255,0.12)" stroke-width="1.15"/><line x1="597.45" y1="2.00" x2="597.45" y2="190.00" stroke="rgba(240,250,255,0.12)" stroke-width="1.15"/><line x1="731.45" y1="2.00" x2="731.45" y2="190.00" stroke="rgba(240,250,255,0.12)" stroke-width="1.15"/><polygon points="1.95,12.80 10.05,17.10 22.65,19.10 36.55,93.90 49.65,25.90 63.45,26.70 76.85,85.90 89.45,39.80 103.25,52.90 116.65,47.80 129.75,82.60 142.85,81.30 156.95,102.00 170.05,21.60 183.15,69.30 197.25,71.30 209.85,25.20 222.95,17.90 236.75,90.20 250.15,90.20 263.25,85.90 276.55,161.90 290.15,104.80 303.05,104.80 316.85,155.60 329.95,107.80 343.05,111.10 356.95,158.20 370.25,85.10 383.05,82.60 397.15,153.60 409.75,88.10 423.05,119.10 436.95,120.40 449.95,81.30 463.35,78.10 476.45,151.90 489.85,89.40 502.95,87.10 516.75,149.40 529.85,103.30 543.25,83.90 556.55,145.60 570.15,78.80 583.55,81.30 596.85,152.60 609.95,83.10 622.55,83.90 636.95,97.20 649.75,90.20 662.85,90.20 676.75,151.90 690.05,114.10 703.65,112.10 716.95,113.30 730.15,99.50 743.45,99.50 756.85,138.50 770.45,87.10 783.25,85.60 796.85,85.60 796.85,182.00 1.95,182.00" fill="#7362a6" fill-opacity="0.09"/><polyline points="1.95,12.80 10.05,17.10 22.65,19.10 36.55,93.90 49.65,25.90 63.45,26.70 76.85,85.90 89.45,39.80 103.25,52.90 116.65,47.80 129.75,82.60 142.85,81.30 156.95,102.00 170.05,21.60 183.15,69.30 197.25,71.30 209.85,25.20 222.95,17.90 236.75,90.20 250.15,90.20 263.25,85.90 276.55,161.90 290.15,104.80 303.05,104.80 316.85,155.60 329.95,107.80 343.05,111.10 356.95,158.20 370.25,85.10 383.05,82.60 397.15,153.60 409.75,88.10 423.05,119.10 436.95,120.40 449.95,81.30 463.35,78.10 476.45,151.90 489.85,89.40 502.95,87.10 516.75,149.40 529.85,103.30 543.25,83.90 556.55,145.60 570.15,78.80 583.55,81.30 596.85,152.60 609.95,83.10 622.55,83.90 636.95,97.20 649.75,90.20 662.85,90.20 676.75,151.90 690.05,114.10 703.65,112.10 716.95,113.30 730.15,99.50 743.45,99.50 756.85,138.50 770.45,87.10 783.25,85.60 796.85,85.60" fill="none" stroke="#7362a6" stroke-width="2.2" stroke-linejoin="round"/></svg>
<div class="t" style="left:1229.28px;top:1437.51px;font-size:25.5px;color:#ccccdc;-webkit-text-stroke:0.45px #ccccdc;transform:scaleX(1.0077);transform-origin:left center;">80 Mil</div>
<div class="t" style="left:1229.28px;top:1475.21px;font-size:25.5px;color:#ccccdc;-webkit-text-stroke:0.45px #ccccdc;transform:scaleX(1.0077);transform-origin:left center;">75 Mil</div>
<div class="t" style="left:1229.28px;top:1512.51px;font-size:25.5px;color:#ccccdc;-webkit-text-stroke:0.45px #ccccdc;transform:scaleX(1.0077);transform-origin:left center;">70 Mil</div>
<div class="t" style="left:1229.28px;top:1550.31px;font-size:25.5px;color:#ccccdc;-webkit-text-stroke:0.45px #ccccdc;transform:scaleX(1.0077);transform-origin:left center;">65 Mil</div>
<div class="t" style="left:1229.28px;top:1587.31px;font-size:25.5px;color:#ccccdc;-webkit-text-stroke:0.45px #ccccdc;transform:scaleX(1.0077);transform-origin:left center;">60 Mil</div>
<div class="t" style="left:869.62px;width:1000px;text-align:center;top:1649.41px;font-size:25.5px;color:#ccccdc;-webkit-text-stroke:0.45px #ccccdc;transform:scaleX(1.0400);transform-origin:center center;">20:00</div>
<div class="t" style="left:1003.32px;width:1000px;text-align:center;top:1649.41px;font-size:25.5px;color:#ccccdc;-webkit-text-stroke:0.45px #ccccdc;transform:scaleX(1.0400);transform-origin:center center;">20:10</div>
<div class="t" style="left:1137.02px;width:1000px;text-align:center;top:1649.41px;font-size:25.5px;color:#ccccdc;-webkit-text-stroke:0.45px #ccccdc;transform:scaleX(1.0400);transform-origin:center center;">20:20</div>
<div class="t" style="left:1270.72px;width:1000px;text-align:center;top:1649.41px;font-size:25.5px;color:#ccccdc;-webkit-text-stroke:0.45px #ccccdc;transform:scaleX(1.0400);transform-origin:center center;">20:30</div>
<div class="t" style="left:1404.42px;width:1000px;text-align:center;top:1649.41px;font-size:25.5px;color:#ccccdc;-webkit-text-stroke:0.45px #ccccdc;transform:scaleX(1.0400);transform-origin:center center;">20:40</div>
<div class="t" style="left:1538.12px;width:1000px;text-align:center;top:1649.41px;font-size:25.5px;color:#ccccdc;-webkit-text-stroke:0.45px #ccccdc;transform:scaleX(1.0400);transform-origin:center center;">20:50</div>
<div style="position:absolute;left:1229.25px;top:1703.50px;width:28.00px;height:8.00px;box-sizing:border-box;background:#7362a6;border-radius:4px;"></div>
<div class="t" style="left:1273.47px;top:1694.21px;font-size:25.5px;color:#ccccdc;-webkit-text-stroke:0.45px #ccccdc;transform:scaleX(0.9623);transform-origin:left center;">avg</div>
<div style="position:absolute;left:2160.75px;top:1351.50px;width:943.50px;height:399.75px;box-sizing:border-box;background:#1a1c20;border:2px solid #313238;border-radius:5px;"></div>
<div class="t" style="left:2180.00px;top:1369.76px;font-size:31px;color:#ccccdc;-webkit-text-stroke:1.0px #ccccdc;transform:scaleX(0.9983);transform-origin:left center;">asserts:error_log:threshold</div>
<div style="position:absolute;left:2980.25px;top:1361.30px;width:105.75px;height:48.00px;box-sizing:border-box;border:2px solid #7ea5fd;border-radius:4px;"></div>
<div class="t" style="left:2997.10px;top:1371.69px;font-size:26px;color:#7ea5fd;-webkit-text-stroke:0.7px #7ea5fd;transform:scaleX(0.9934);transform-origin:left center;">Select</div>
<svg style="position:absolute;left:2237.45px;top:1447.50px;" width="837" height="194" viewBox="0 0 837 194"><line x1="2.00" y1="3.00" x2="831.80" y2="3.00" stroke="rgba(240,250,255,0.12)" stroke-width="1.15"/><line x1="2.00" y1="39.00" x2="831.80" y2="39.00" stroke="rgba(240,250,255,0.12)" stroke-width="1.15"/><line x1="2.00" y1="75.00" x2="831.80" y2="75.00" stroke="rgba(240,250,255,0.12)" stroke-width="1.15"/><line x1="2.00" y1="111.00" x2="831.80" y2="111.00" stroke="rgba(240,250,255,0.12)" stroke-width="1.15"/><line x1="2.00" y1="147.00" x2="831.80" y2="147.00" stroke="rgba(240,250,255,0.12)" stroke-width="1.15"/><line x1="2.00" y1="182.00" x2="831.80" y2="182.00" stroke="rgba(240,250,255,0.12)" stroke-width="1.15"/><line x1="65.05" y1="2.00" x2="65.05" y2="190.00" stroke="rgba(240,250,255,0.12)" stroke-width="1.15"/><line x1="203.05" y1="2.00" x2="203.05" y2="190.00" stroke="rgba(240,250,255,0.12)" stroke-width="1.15"/><line x1="341.05" y1="2.00" x2="341.05" y2="190.00" stroke="rgba(240,250,255,0.12)" stroke-width="1.15"/><line x1="479.05" y1="2.00" x2="479.05" y2="190.00" stroke="rgba(240,250,255,0.12)" stroke-width="1.15"/><line x1="618.05" y1="2.00" x2="618.05" y2="190.00" stroke="rgba(240,250,255,0.12)" stroke-width="1.15"/><line x1="756.05" y1="2.00" x2="756.05" y2="190.00" stroke="rgba(240,250,255,0.12)" stroke-width="1.15"/><polygon points="2.00,182.00 824.80,182.00 824.80,182.00 2.00,182.00" fill="#87bf74" fill-opacity="0.09"/><polyline points="2.00,182.00 824.80,182.00" fill="none" stroke="#87bf74" stroke-width="2.2" stroke-linejoin="round"/></svg>
<div class="t" style="left:2189.65px;top:1437.51px;font-size:25.5px;color:#ccccdc;-webkit-text-stroke:0.45px #ccccdc;transform:scaleX(0.9076);transform-origin:left center;">100</div>
<div class="t" style="left:2201.16px;top:1473.51px;font-size:25.5px;color:#ccccdc;-webkit-text-stroke:0.45px #ccccdc;transform:scaleX(0.9542);transform-origin:left center;">80</div>
<div class="t" style="left:2201.16px;top:1509.51px;font-size:25.5px;color:#ccccdc;-webkit-text-stroke:0.45px #ccccdc;transform:scaleX(0.9542);transform-origin:left center;">60</div>
<div class="t" style="left:2201.16px;top:1545.51px;font-size:25.5px;color:#ccccdc;-webkit-text-stroke:0.45px #ccccdc;transform:scaleX(0.9542);transform-origin:left center;">40</div>
<div class="t" style="left:2201.16px;top:1581.31px;font-size:25.5px;color:#ccccdc;-webkit-text-stroke:0.45px #ccccdc;transform:scaleX(0.9542);transform-origin:left center;">20</div>
<div class="t" style="left:2214.50px;top:1616.81px;font-size:25.5px;color:#ccccdc;-webkit-text-stroke:0.45px #ccccdc;transform:scaleX(0.9700);transform-origin:left center;">0</div>
<div class="t" style="left:1802.10px;width:1000px;text-align:center;top:1649.41px;font-size:25.5px;color:#ccccdc;-webkit-text-stroke:0.45px #ccccdc;transform:scaleX(1.0400);transform-origin:center center;">20:00</div>
<div class="t" style="left:1940.40px;width:1000px;text-align:center;top:1649.41px;font-size:25.5px;color:#ccccdc;-webkit-text-stroke:0.45px #ccccdc;transform:scaleX(1.0400);transform-origin:center center;">20:10</div>
<div class="t" style="left:2078.70px;width:1000px;text-align:center;top:1649.41px;font-size:25.5px;color:#ccccdc;-webkit-text-stroke:0.45px #ccccdc;transform:scaleX(1.0400);transform-origin:center center;">20:20</div>
<div class="t" style="left:2217.00px;width:1000px;text-align:center;top:1649.41px;font-size:25.5px;color:#ccccdc;-webkit-text-stroke:0.45px #ccccdc;transform:scaleX(1.0400);transform-origin:center center;">20:30</div>
<div class="t" style="left:2355.30px;width:1000px;text-align:center;top:1649.41px;font-size:25.5px;color:#ccccdc;-webkit-text-stroke:0.45px #ccccdc;transform:scaleX(1.0400);transform-origin:center center;">20:40</div>
<div class="t" style="left:2493.60px;width:1000px;text-align:center;top:1649.41px;font-size:25.5px;color:#ccccdc;-webkit-text-stroke:0.45px #ccccdc;transform:scaleX(1.0400);transform-origin:center center;">20:50</div>
<div style="position:absolute;left:2187.25px;top:1703.50px;width:28.00px;height:8.00px;box-sizing:border-box;background:#87bf74;border-radius:4px;"></div>
<div class="t" style="left:2231.47px;top:1694.21px;font-size:25.5px;color:#ccccdc;-webkit-text-stroke:0.45px #ccccdc;transform:scaleX(0.9623);transform-origin:left center;">avg</div>
<div style="position:absolute;left:0;top:0;width:3248px;height:1935.5px;overflow:hidden;">
<div style="position:absolute;left:243.50px;top:1767.25px;width:943.50px;height:399.75px;box-sizing:border-box;background:#1a1c20;border:2px solid #313238;border-radius:5px;"></div>
<div class="t" style="left:262.75px;top:1785.51px;font-size:31px;color:#ccccdc;-webkit-text-stroke:1.0px #ccccdc;transform:scaleX(0.9997);transform-origin:left center;">asserts:error:fast_burn_factor</div>
<div style="position:absolute;left:1063.00px;top:1777.05px;width:105.75px;height:48.00px;box-sizing:border-box;border:2px solid #7ea5fd;border-radius:4px;"></div>
<div class="t" style="left:1079.85px;top:1787.44px;font-size:26px;color:#7ea5fd;-webkit-text-stroke:0.7px #7ea5fd;transform:scaleX(0.9934);transform-origin:left center;">Select</div>
<svg style="position:absolute;left:308.50px;top:1863.25px;" width="849" height="194" viewBox="0 0 849 194"><line x1="2.00" y1="28.25" x2="843.50" y2="28.25" stroke="rgba(240,250,255,0.12)" stroke-width="1.15"/><line x1="2.00" y1="59.25" x2="843.50" y2="59.25" stroke="rgba(240,250,255,0.12)" stroke-width="1.15"/><line x1="66.00" y1="2.00" x2="66.00" y2="190.00" stroke="rgba(240,250,255,0.12)" stroke-width="1.15"/><line x1="206.00" y1="2.00" x2="206.00" y2="190.00" stroke="rgba(240,250,255,0.12)" stroke-width="1.15"/><line x1="346.00" y1="2.00" x2="346.00" y2="190.00" stroke="rgba(240,250,255,0.12)" stroke-width="1.15"/><line x1="486.00" y1="2.00" x2="486.00" y2="190.00" stroke="rgba(240,250,255,0.12)" stroke-width="1.15"/><line x1="627.00" y1="2.00" x2="627.00" y2="190.00" stroke="rgba(240,250,255,0.12)" stroke-width="1.15"/><line x1="767.00" y1="2.00" x2="767.00" y2="190.00" stroke="rgba(240,250,255,0.12)" stroke-width="1.15"/></svg>
<div class="t" style="left:272.21px;top:1878.46px;font-size:25.5px;color:#ccccdc;-webkit-text-stroke:0.45px #ccccdc;transform:scaleX(0.9542);transform-origin:left center;">25</div>
<div class="t" style="left:272.21px;top:1909.21px;font-size:25.5px;color:#ccccdc;-webkit-text-stroke:0.45px #ccccdc;transform:scaleX(0.9542);transform-origin:left center;">20</div>
<div class="t" style="left:-125.97px;width:1000px;text-align:center;top:2065.16px;font-size:25.5px;color:#ccccdc;-webkit-text-stroke:0.45px #ccccdc;transform:scaleX(1.0400);transform-origin:center center;">20:00</div>
<div class="t" style="left:14.28px;width:1000px;text-align:center;top:2065.16px;font-size:25.5px;color:#ccccdc;-webkit-text-stroke:0.45px #ccccdc;transform:scaleX(1.0400);transform-origin:center center;">20:10</div>
<div class="t" style="left:154.53px;width:1000px;text-align:center;top:2065.16px;font-size:25.5px;color:#ccccdc;-webkit-text-stroke:0.45px #ccccdc;transform:scaleX(1.0400);transform-origin:center center;">20:20</div>
<div class="t" style="left:294.78px;width:1000px;text-align:center;top:2065.16px;font-size:25.5px;color:#ccccdc;-webkit-text-stroke:0.45px #ccccdc;transform:scaleX(1.0400);transform-origin:center center;">20:30</div>
<div class="t" style="left:435.03px;width:1000px;text-align:center;top:2065.16px;font-size:25.5px;color:#ccccdc;-webkit-text-stroke:0.45px #ccccdc;transform:scaleX(1.0400);transform-origin:center center;">20:40</div>
<div class="t" style="left:575.28px;width:1000px;text-align:center;top:2065.16px;font-size:25.5px;color:#ccccdc;-webkit-text-stroke:0.45px #ccccdc;transform:scaleX(1.0400);transform-origin:center center;">20:50</div>
<div style="position:absolute;left:270.00px;top:2119.25px;width:28.00px;height:8.00px;box-sizing:border-box;background:#73bf69;border-radius:4px;"></div>
<div class="t" style="left:314.22px;top:2109.96px;font-size:25.5px;color:#ccccdc;-webkit-text-stroke:0.45px #ccccdc;transform:scaleX(0.9623);transform-origin:left center;">avg</div>
<div style="position:absolute;left:1202.75px;top:1767.25px;width:943.50px;height:399.75px;box-sizing:border-box;background:#1a1c20;border:2px solid #313238;border-radius:5px;"></div>
<div class="t" style="left:1222.00px;top:1785.51px;font-size:31px;color:#ccccdc;-webkit-text-stroke:1.0px #ccccdc;transform:scaleX(1.0078);transform-origin:left center;">asserts:error:ratio:threshold</div>
<div style="position:absolute;left:2022.25px;top:1777.05px;width:105.75px;height:48.00px;box-sizing:border-box;border:2px solid #7ea5fd;border-radius:4px;"></div>
<div class="t" style="left:2039.10px;top:1787.44px;font-size:26px;color:#7ea5fd;-webkit-text-stroke:0.7px #7ea5fd;transform:scaleX(0.9934);transform-origin:left center;">Select</div>
<svg style="position:absolute;left:1288.65px;top:1863.25px;" width="828" height="194" viewBox="0 0 828 194"><line x1="2.00" y1="3.25" x2="822.60" y2="3.25" stroke="rgba(240,250,255,0.12)" stroke-width="1.15"/><line x1="2.00" y1="48.25" x2="822.60" y2="48.25" stroke="rgba(240,250,255,0.12)" stroke-width="1.15"/><line x1="63.85" y1="2.00" x2="63.85" y2="190.00" stroke="rgba(240,250,255,0.12)" stroke-width="1.15"/><line x1="200.85" y1="2.00" x2="200.85" y2="190.00" stroke="rgba(240,250,255,0.12)" stroke-width="1.15"/><line x1="337.85" y1="2.00" x2="337.85" y2="190.00" stroke="rgba(240,250,255,0.12)" stroke-width="1.15"/><line x1="473.85" y1="2.00" x2="473.85" y2="190.00" stroke="rgba(240,250,255,0.12)" stroke-width="1.15"/><line x1="610.85" y1="2.00" x2="610.85" y2="190.00" stroke="rgba(240,250,255,0.12)" stroke-width="1.15"/><line x1="747.85" y1="2.00" x2="747.85" y2="190.00" stroke="rgba(240,250,255,0.12)" stroke-width="1.15"/></svg>
<div class="t" style="left:1244.57px;top:1853.71px;font-size:25.5px;color:#ccccdc;-webkit-text-stroke:0.45px #ccccdc;transform:scaleX(0.9834);transform-origin:left center;">0.2</div>
<div class="t" style="left:1237.84px;top:1898.46px;font-size:25.5px;color:#ccccdc;-webkit-text-stroke:0.45px #ccccdc;transform:scaleX(0.8381);transform-origin:left center;">0.15</div>
<div class="t" style="left:852.61px;width:1000px;text-align:center;top:2065.16px;font-size:25.5px;color:#ccccdc;-webkit-text-stroke:0.45px #ccccdc;transform:scaleX(1.0400);transform-origin:center center;">20:00</div>
<div class="t" style="left:989.37px;width:1000px;text-align:center;top:2065.16px;font-size:25.5px;color:#ccccdc;-webkit-text-stroke:0.45px #ccccdc;transform:scaleX(1.0400);transform-origin:center center;">20:10</div>
<div class="t" style="left:1126.14px;width:1000px;text-align:center;top:2065.16px;font-size:25.5px;color:#ccccdc;-webkit-text-stroke:0.45px #ccccdc;transform:scaleX(1.0400);transform-origin:center center;">20:20</div>
<div class="t" style="left:1262.91px;width:1000px;text-align:center;top:2065.16px;font-size:25.5px;color:#ccccdc;-webkit-text-stroke:0.45px #ccccdc;transform:scaleX(1.0400);transform-origin:center center;">20:30</div>
<div class="t" style="left:1399.67px;width:1000px;text-align:center;top:2065.16px;font-size:25.5px;color:#ccccdc;-webkit-text-stroke:0.45px #ccccdc;transform:scaleX(1.0400);transform-origin:center center;">20:40</div>
<div class="t" style="left:1536.44px;width:1000px;text-align:center;top:2065.16px;font-size:25.5px;color:#ccccdc;-webkit-text-stroke:0.45px #ccccdc;transform:scaleX(1.0400);transform-origin:center center;">20:50</div>
<div style="position:absolute;left:1229.25px;top:2119.25px;width:28.00px;height:8.00px;box-sizing:border-box;background:#73bf69;border-radius:4px;"></div>
<div class="t" style="left:1273.47px;top:2109.96px;font-size:25.5px;color:#ccccdc;-webkit-text-stroke:0.45px #ccccdc;transform:scaleX(0.9623);transform-origin:left center;">avg</div>
<div style="position:absolute;left:2160.75px;top:1767.25px;width:943.50px;height:399.75px;box-sizing:border-box;background:#1a1c20;border:2px solid #313238;border-radius:5px;"></div>
<div class="t" style="left:2180.00px;top:1785.51px;font-size:31px;color:#ccccdc;-webkit-text-stroke:1.0px #ccccdc;transform:scaleX(0.9929);transform-origin:left center;">asserts:error:ratio:threshold_by_stddev</div>
<div style="position:absolute;left:2980.25px;top:1777.05px;width:105.75px;height:48.00px;box-sizing:border-box;border:2px solid #7ea5fd;border-radius:4px;"></div>
<div class="t" style="left:2997.10px;top:1787.44px;font-size:26px;color:#7ea5fd;-webkit-text-stroke:0.7px #7ea5fd;transform:scaleX(0.9934);transform-origin:left center;">Select</div>
<svg style="position:absolute;left:2211.45px;top:1863.25px;" width="863" height="194" viewBox="0 0 863 194"><line x1="2.00" y1="3.25" x2="857.80" y2="3.25" stroke="rgba(240,250,255,0.12)" stroke-width="1.15"/><line x1="2.00" y1="48.25" x2="857.80" y2="48.25" stroke="rgba(240,250,255,0.12)" stroke-width="1.15"/><line x1="67.05" y1="2.00" x2="67.05" y2="190.00" stroke="rgba(240,250,255,0.12)" stroke-width="1.15"/><line x1="209.05" y1="2.00" x2="209.05" y2="190.00" stroke="rgba(240,250,255,0.12)" stroke-width="1.15"/><line x1="352.05" y1="2.00" x2="352.05" y2="190.00" stroke="rgba(240,250,255,0.12)" stroke-width="1.15"/><line x1="494.05" y1="2.00" x2="494.05" y2="190.00" stroke="rgba(240,250,255,0.12)" stroke-width="1.15"/><line x1="637.05" y1="2.00" x2="637.05" y2="190.00" stroke="rgba(240,250,255,0.12)" stroke-width="1.15"/><line x1="780.05" y1="2.00" x2="780.05" y2="190.00" stroke="rgba(240,250,255,0.12)" stroke-width="1.15"/></svg>
<div class="t" style="left:2188.50px;top:1853.71px;font-size:25.5px;color:#ccccdc;-webkit-text-stroke:0.45px #ccccdc;transform:scaleX(0.9700);transform-origin:left center;">4</div>
<div class="t" style="left:2188.50px;top:1898.46px;font-size:25.5px;color:#ccccdc;-webkit-text-stroke:0.45px #ccccdc;transform:scaleX(0.9700);transform-origin:left center;">3</div>
<div class="t" style="left:1778.06px;width:1000px;text-align:center;top:2065.16px;font-size:25.5px;color:#ccccdc;-webkit-text-stroke:0.45px #ccccdc;transform:scaleX(1.0400);transform-origin:center center;">20:00</div>
<div class="t" style="left:1920.70px;width:1000px;text-align:center;top:2065.16px;font-size:25.5px;color:#ccccdc;-webkit-text-stroke:0.45px #ccccdc;transform:scaleX(1.0400);transform-origin:center center;">20:10</div>
<div class="t" style="left:2063.33px;width:1000px;text-align:center;top:2065.16px;font-size:25.5px;color:#ccccdc;-webkit-text-stroke:0.45px #ccccdc;transform:scaleX(1.0400);transform-origin:center center;">20:20</div>
<div class="t" style="left:2205.96px;width:1000px;text-align:center;top:2065.16px;font-size:25.5px;color:#ccccdc;-webkit-text-stroke:0.45px #ccccdc;transform:scaleX(1.0400);transform-origin:center center;">20:30</div>
<div class="t" style="left:2348.60px;width:1000px;text-align:center;top:2065.16px;font-size:25.5px;color:#ccccdc;-webkit-text-stroke:0.45px #ccccdc;transform:scaleX(1.0400);transform-origin:center center;">20:40</div>
<div class="t" style="left:2491.23px;width:1000px;text-align:center;top:2065.16px;font-size:25.5px;color:#ccccdc;-webkit-text-stroke:0.45px #ccccdc;transform:scaleX(1.0400);transform-origin:center center;">20:50</div>
<div style="position:absolute;left:2187.25px;top:2119.25px;width:28.00px;height:8.00px;box-sizing:border-box;background:#73bf69;border-radius:4px;"></div>
<div class="t" style="left:2231.47px;top:2109.96px;font-size:25.5px;color:#ccccdc;-webkit-text-stroke:0.45px #ccccdc;transform:scaleX(0.9623);transform-origin:left center;">avg</div>
</div>
<div style="position:absolute;left:112.00px;top:76.00px;width:3023.00px;height:1888.00px;box-sizing:border-box;border:2px solid #48474c;border-radius:20px;"></div>
<div style="position:absolute;left:112.00px;top:76.00px;width:3023.00px;height:104.00px;box-sizing:border-box;border:2px solid #6c6c6c;border-top-color:#7c7c7c;border-bottom:none;border-radius:20px 20px 0 0;"></div>
</div>
</body></html>
